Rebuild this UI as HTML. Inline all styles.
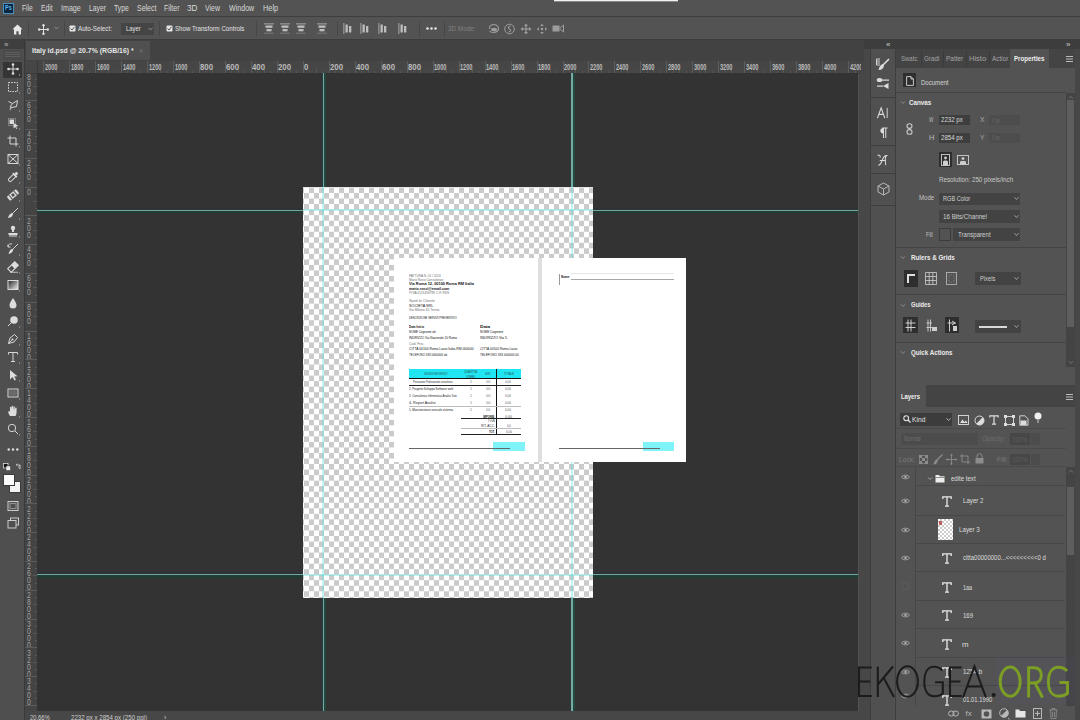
<!DOCTYPE html><html><head><meta charset="utf-8"><style>
*{margin:0;padding:0;box-sizing:border-box}
html,body{width:1080px;height:720px;overflow:hidden;background:#535353;font-family:"Liberation Sans",sans-serif}
.a,.t{position:absolute}
.t{white-space:nowrap;line-height:1;transform-origin:0 50%}
svg{position:absolute;overflow:visible}
.checker{background-color:#fff;background-image:linear-gradient(45deg,#cdcdcd 25%,transparent 25%,transparent 75%,#cdcdcd 75%),linear-gradient(45deg,#cdcdcd 25%,transparent 25%,transparent 75%,#cdcdcd 75%);background-size:10px 10px;background-position:0 0,5px 5px}
</style></head><body><div class="a" style="left:0px;top:0px;width:1080px;height:16px;background:#535353;"></div><div class="a" style="left:0px;top:16px;width:1080px;height:1px;background:#3e3e3e;"></div><div class="a" style="left:3px;top:3px;width:11px;height:11px;background:#0a2540;border:1px solid #4a90c0;"></div><span class="t" style="left:5.00px;top:5.47px;font-size:6.5px;color:#5cb8f0;font-weight:bold;transform:scaleX(0.840);">Ps</span><span class="t" style="left:22.00px;top:4.30px;font-size:8.5px;color:#d9d9d9;transform:scaleX(0.787);">File</span><span class="t" style="left:40.90px;top:4.30px;font-size:8.5px;color:#d9d9d9;transform:scaleX(0.792);">Edit</span><span class="t" style="left:61.00px;top:4.30px;font-size:8.5px;color:#d9d9d9;transform:scaleX(0.837);">Image</span><span class="t" style="left:88.80px;top:4.30px;font-size:8.5px;color:#d9d9d9;transform:scaleX(0.803);">Layer</span><span class="t" style="left:114.00px;top:4.30px;font-size:8.5px;color:#d9d9d9;transform:scaleX(0.802);">Type</span><span class="t" style="left:136.70px;top:4.30px;font-size:8.5px;color:#d9d9d9;transform:scaleX(0.824);">Select</span><span class="t" style="left:164.00px;top:4.30px;font-size:8.5px;color:#d9d9d9;transform:scaleX(0.819);">Filter</span><span class="t" style="left:187.00px;top:4.30px;font-size:8.5px;color:#d9d9d9;transform:scaleX(0.969);">3D</span><span class="t" style="left:204.80px;top:4.30px;font-size:8.5px;color:#d9d9d9;transform:scaleX(0.815);">View</span><span class="t" style="left:228.50px;top:4.30px;font-size:8.5px;color:#d9d9d9;transform:scaleX(0.833);">Window</span><span class="t" style="left:262.60px;top:4.30px;font-size:8.5px;color:#d9d9d9;transform:scaleX(0.867);">Help</span><div class="a" style="left:554px;top:0px;width:124px;height:2px;background:#f2f2f2;border-bottom:1px solid #888;"></div><div class="a" style="left:0px;top:17px;width:1080px;height:22px;background:#535353;"></div><div class="a" style="left:0px;top:39px;width:1080px;height:1px;background:#3c3c3c;"></div><svg style="left:12px;top:24px" width="11" height="11" viewBox="0 0 11 11"><path d="M5.5 0.5 L10.5 5.2 L9 5.2 L9 10.5 L6.6 10.5 L6.6 7.3 L4.4 7.3 L4.4 10.5 L2 10.5 L2 5.2 L0.5 5.2 Z" fill="#e8e8e8"/></svg><div class="a" style="left:28px;top:21px;width:1px;height:15px;background:#474747;"></div><svg style="left:38px;top:24px" width="11" height="11" viewBox="0 0 11 11"><g fill="#e0e0e0"><rect x="5" y="1" width="1" height="9"/><rect x="1" y="5" width="9" height="1"/><circle cx="5.5" cy="1.2" r="1.2"/><circle cx="5.5" cy="9.8" r="1.2"/><circle cx="1.2" cy="5.5" r="1.2"/><circle cx="9.8" cy="5.5" r="1.2"/></g></svg><svg style="left:54px;top:26px" width="5" height="4" viewBox="0 0 5 4"><path d="M0.5 0.8 L2.5 3 L4.5 0.8" stroke="#9a9a9a" fill="none" stroke-width="0.8"/></svg><div class="a" style="left:64px;top:21px;width:1px;height:15px;background:#474747;"></div><svg style="left:68.5px;top:25px" width="7" height="7" viewBox="0 0 7 7"><rect x="0.5" y="0.5" width="6" height="6" rx="1" fill="#e6e6e6"/><path d="M1.6 3.5 L3 5 L5.5 1.8" stroke="#535353" stroke-width="1" fill="none"/></svg><span class="t" style="left:77.80px;top:24.74px;font-size:8px;color:#e2e2e2;transform:scaleX(0.777);">Auto-Select:</span><div class="a" style="left:121px;top:23px;width:33px;height:12px;background:#454545;"></div><span class="t" style="left:126.00px;top:25.39px;font-size:7.5px;color:#e2e2e2;transform:scaleX(0.779);">Layer</span><svg style="left:148px;top:27px" width="5" height="4" viewBox="0 0 5 4"><path d="M0.5 0.8 L2.5 3 L4.5 0.8" stroke="#a0a0a0" fill="none" stroke-width="0.8"/></svg><div class="a" style="left:159px;top:21px;width:1px;height:15px;background:#474747;"></div><svg style="left:165.5px;top:25px" width="7" height="7" viewBox="0 0 7 7"><rect x="0.5" y="0.5" width="6" height="6" rx="1" fill="#e6e6e6"/><path d="M1.6 3.5 L3 5 L5.5 1.8" stroke="#535353" stroke-width="1" fill="none"/></svg><span class="t" style="left:175.30px;top:24.74px;font-size:8px;color:#e2e2e2;transform:scaleX(0.768);">Show Transform Controls</span><div class="a" style="left:256px;top:21px;width:1px;height:15px;background:#474747;"></div><svg style="left:264px;top:23px" width="10" height="11" viewBox="0 0 10 11"><g fill="#bdbdbd"><rect x="0" y="0.5" width="10" height="0.8"/><rect x="1.5" y="2.5" width="7" height="2.3"/><rect x="2.5" y="6" width="5" height="2.3"/><rect x="0" y="9.8" width="10" height="0.6" opacity="0.6"/></g></svg><svg style="left:280px;top:23px" width="10" height="11" viewBox="0 0 10 11"><g fill="#bdbdbd"><rect x="0" y="0.5" width="10" height="0.8"/><rect x="1.5" y="2.5" width="7" height="2.3"/><rect x="2.5" y="6" width="5" height="2.3"/><rect x="0" y="9.8" width="10" height="0.6" opacity="0.6"/></g></svg><svg style="left:296px;top:23px" width="10" height="11" viewBox="0 0 10 11"><g fill="#bdbdbd"><rect x="0" y="0.5" width="10" height="0.8"/><rect x="1.5" y="2.5" width="7" height="2.3"/><rect x="2.5" y="6" width="5" height="2.3"/><rect x="0" y="9.8" width="10" height="0.6" opacity="0.6"/></g></svg><svg style="left:317px;top:23px" width="10" height="11" viewBox="0 0 10 11"><g fill="#bdbdbd"><rect x="0" y="0.5" width="10" height="0.8"/><rect x="1.5" y="2.5" width="7" height="2.3"/><rect x="2.5" y="6" width="5" height="2.3"/><rect x="0" y="9.8" width="10" height="0.6" opacity="0.6"/></g></svg><div class="a" style="left:337px;top:21px;width:1px;height:15px;background:#474747;"></div><svg style="left:343px;top:23px" width="10" height="11" viewBox="0 0 10 11"><g fill="#bdbdbd"><rect x="0.5" y="0" width="0.8" height="11"/><rect x="2.5" y="1.5" width="2.3" height="8"/><rect x="6" y="3" width="2.3" height="6.5"/></g></svg><svg style="left:360px;top:23px" width="10" height="11" viewBox="0 0 10 11"><g fill="#bdbdbd"><rect x="0.5" y="0" width="0.8" height="11"/><rect x="2.5" y="1.5" width="2.3" height="8"/><rect x="6" y="3" width="2.3" height="6.5"/></g></svg><svg style="left:378px;top:23px" width="10" height="11" viewBox="0 0 10 11"><g fill="#bdbdbd"><rect x="0.5" y="0" width="0.8" height="11"/><rect x="2.5" y="1.5" width="2.3" height="8"/><rect x="6" y="3" width="2.3" height="6.5"/></g></svg><svg style="left:398px;top:23px" width="10" height="11" viewBox="0 0 10 11"><g fill="#bdbdbd"><rect x="0.5" y="0" width="0.8" height="11"/><rect x="2.5" y="1.5" width="2.3" height="8"/><rect x="6" y="3" width="2.3" height="6.5"/></g></svg><div class="a" style="left:419px;top:21px;width:1px;height:15px;background:#474747;"></div><svg style="left:426px;top:27px" width="11" height="3" viewBox="0 0 11 3"><g fill="#e6e6e6"><circle cx="1.5" cy="1.5" r="1.3"/><circle cx="5.5" cy="1.5" r="1.3"/><circle cx="9.5" cy="1.5" r="1.3"/></g></svg><div class="a" style="left:444px;top:21px;width:1px;height:15px;background:#474747;"></div><span class="t" style="left:448.30px;top:24.99px;font-size:7.5px;color:#808080;transform:scaleX(0.845);">3D Mode:</span><svg style="left:487.5px;top:23px" width="12" height="11" viewBox="0 0 12 11"><path d="M2 6 C0 3 5 0.5 8 2 C10.5 3.2 11.5 6 9.5 8 C7.5 10 3 10 1.5 8" stroke="#9c9c9c" stroke-width="1.1" fill="none"/><ellipse cx="6" cy="6.5" rx="3" ry="1.8" fill="#9c9c9c"/></svg><svg style="left:503.5px;top:22.5px" width="11" height="12" viewBox="0 0 11 12"><circle cx="5.5" cy="6" r="4.8" stroke="#9c9c9c" stroke-width="1" fill="none"/><path d="M6.5 3 C4 3 4 5.5 5.5 6 C7 6.5 7 9 4.5 9" stroke="#9c9c9c" stroke-width="1.1" fill="none"/></svg><svg style="left:519.5px;top:22.5px" width="12" height="12" viewBox="0 0 12 12"><path d="M6 0.5 L8 3 H4 Z M6 11.5 L8 9 H4 Z M0.5 6 L3 4 V8 Z M11.5 6 L9 4 V8 Z" fill="#9c9c9c"/><rect x="5.4" y="2.5" width="1.2" height="7" fill="#9c9c9c"/><rect x="2.5" y="5.4" width="7" height="1.2" fill="#9c9c9c"/></svg><svg style="left:535.5px;top:22.5px" width="12" height="12" viewBox="0 0 12 12"><path d="M6 0.8 L7.8 3 H4.2 Z M6 11.2 L7.8 9 H4.2 Z M0.8 6 L3 4.2 V7.8 Z M11.2 6 L9 4.2 V7.8 Z" fill="#9c9c9c"/><circle cx="6" cy="6" r="1.3" fill="#9c9c9c"/></svg><svg style="left:552px;top:24px" width="12" height="9" viewBox="0 0 12 9"><rect x="0.5" y="1.5" width="7" height="6" fill="#9c9c9c"/><path d="M7.5 4.5 L11.5 1 V8 Z" fill="none" stroke="#9c9c9c" stroke-width="1"/></svg><div class="a" style="left:25px;top:40px;width:839px;height:21px;background:#424242;"></div><div class="a" style="left:25.8px;top:41px;width:124px;height:19px;background:#505050;"></div><span class="t" style="left:31.70px;top:47.14px;font-size:8px;color:#e6e6e6;font-weight:bold;transform:scaleX(0.857);">Italy id.psd @ 20.7% (RGB/16) *</span><span class="t" style="left:138.70px;top:47.14px;font-size:8px;color:#7a7a7a;transform:scaleX(0.860);">×</span><div class="a" style="left:25px;top:61px;width:839px;height:12px;background:#464646;"></div><div class="a" style="left:25px;top:73px;width:11.5px;height:638px;background:#444444;"></div><div class="a" style="left:25px;top:72.5px;width:839px;height:0.5px;background:#3a3a3a;"></div><div class="a" style="left:36.5px;top:61px;width:0.5px;height:650px;background:#3a3a3a;"></div><div class="a" style="left:0;top:0;width:861px;height:80px;overflow:hidden"><div class="a" style="left:42.90px;top:61px;width:1px;height:12px;background:#5c5c5c"></div><div class="a" style="left:49.39px;top:71px;width:0.8px;height:2px;background:#585858"></div><div class="a" style="left:55.89px;top:69px;width:0.8px;height:4px;background:#585858"></div><div class="a" style="left:62.38px;top:71px;width:0.8px;height:2px;background:#585858"></div><span class="t" style="left:44.60px;top:62.96px;font-size:9px;color:#bababa;font-weight:bold;transform:scaleX(0.624);">2000</span><div class="a" style="left:68.88px;top:61px;width:1px;height:12px;background:#5c5c5c"></div><div class="a" style="left:75.38px;top:71px;width:0.8px;height:2px;background:#585858"></div><div class="a" style="left:81.87px;top:69px;width:0.8px;height:4px;background:#585858"></div><div class="a" style="left:88.36px;top:71px;width:0.8px;height:2px;background:#585858"></div><span class="t" style="left:70.58px;top:62.96px;font-size:9px;color:#bababa;font-weight:bold;transform:scaleX(0.624);">1800</span><div class="a" style="left:94.86px;top:61px;width:1px;height:12px;background:#5c5c5c"></div><div class="a" style="left:101.35px;top:71px;width:0.8px;height:2px;background:#585858"></div><div class="a" style="left:107.85px;top:69px;width:0.8px;height:4px;background:#585858"></div><div class="a" style="left:114.34px;top:71px;width:0.8px;height:2px;background:#585858"></div><span class="t" style="left:96.56px;top:62.96px;font-size:9px;color:#bababa;font-weight:bold;transform:scaleX(0.624);">1600</span><div class="a" style="left:120.84px;top:61px;width:1px;height:12px;background:#5c5c5c"></div><div class="a" style="left:127.33px;top:71px;width:0.8px;height:2px;background:#585858"></div><div class="a" style="left:133.83px;top:69px;width:0.8px;height:4px;background:#585858"></div><div class="a" style="left:140.32px;top:71px;width:0.8px;height:2px;background:#585858"></div><span class="t" style="left:122.54px;top:62.96px;font-size:9px;color:#bababa;font-weight:bold;transform:scaleX(0.624);">1400</span><div class="a" style="left:146.82px;top:61px;width:1px;height:12px;background:#5c5c5c"></div><div class="a" style="left:153.31px;top:71px;width:0.8px;height:2px;background:#585858"></div><div class="a" style="left:159.81px;top:69px;width:0.8px;height:4px;background:#585858"></div><div class="a" style="left:166.31px;top:71px;width:0.8px;height:2px;background:#585858"></div><span class="t" style="left:148.52px;top:62.96px;font-size:9px;color:#bababa;font-weight:bold;transform:scaleX(0.624);">1200</span><div class="a" style="left:172.80px;top:61px;width:1px;height:12px;background:#5c5c5c"></div><div class="a" style="left:179.29px;top:71px;width:0.8px;height:2px;background:#585858"></div><div class="a" style="left:185.79px;top:69px;width:0.8px;height:4px;background:#585858"></div><div class="a" style="left:192.28px;top:71px;width:0.8px;height:2px;background:#585858"></div><span class="t" style="left:174.50px;top:62.96px;font-size:9px;color:#bababa;font-weight:bold;transform:scaleX(0.624);">1000</span><div class="a" style="left:198.78px;top:61px;width:1px;height:12px;background:#5c5c5c"></div><div class="a" style="left:205.27px;top:71px;width:0.8px;height:2px;background:#585858"></div><div class="a" style="left:211.77px;top:69px;width:0.8px;height:4px;background:#585858"></div><div class="a" style="left:218.26px;top:71px;width:0.8px;height:2px;background:#585858"></div><span class="t" style="left:200.48px;top:62.96px;font-size:9px;color:#bababa;font-weight:bold;transform:scaleX(0.866);">800</span><div class="a" style="left:224.76px;top:61px;width:1px;height:12px;background:#5c5c5c"></div><div class="a" style="left:231.25px;top:71px;width:0.8px;height:2px;background:#585858"></div><div class="a" style="left:237.75px;top:69px;width:0.8px;height:4px;background:#585858"></div><div class="a" style="left:244.25px;top:71px;width:0.8px;height:2px;background:#585858"></div><span class="t" style="left:226.46px;top:62.96px;font-size:9px;color:#bababa;font-weight:bold;transform:scaleX(0.866);">600</span><div class="a" style="left:250.74px;top:61px;width:1px;height:12px;background:#5c5c5c"></div><div class="a" style="left:257.23px;top:71px;width:0.8px;height:2px;background:#585858"></div><div class="a" style="left:263.73px;top:69px;width:0.8px;height:4px;background:#585858"></div><div class="a" style="left:270.22px;top:71px;width:0.8px;height:2px;background:#585858"></div><span class="t" style="left:252.44px;top:62.96px;font-size:9px;color:#bababa;font-weight:bold;transform:scaleX(0.866);">400</span><div class="a" style="left:276.72px;top:61px;width:1px;height:12px;background:#5c5c5c"></div><div class="a" style="left:283.21px;top:71px;width:0.8px;height:2px;background:#585858"></div><div class="a" style="left:289.71px;top:69px;width:0.8px;height:4px;background:#585858"></div><div class="a" style="left:296.20px;top:71px;width:0.8px;height:2px;background:#585858"></div><span class="t" style="left:278.42px;top:62.96px;font-size:9px;color:#bababa;font-weight:bold;transform:scaleX(0.866);">200</span><div class="a" style="left:302.70px;top:61px;width:1px;height:12px;background:#5c5c5c"></div><div class="a" style="left:309.19px;top:71px;width:0.8px;height:2px;background:#585858"></div><div class="a" style="left:315.69px;top:69px;width:0.8px;height:4px;background:#585858"></div><div class="a" style="left:322.19px;top:71px;width:0.8px;height:2px;background:#585858"></div><span class="t" style="left:304.40px;top:62.96px;font-size:9px;color:#bababa;font-weight:bold;transform:scaleX(0.860);">0</span><div class="a" style="left:328.68px;top:61px;width:1px;height:12px;background:#5c5c5c"></div><div class="a" style="left:335.18px;top:71px;width:0.8px;height:2px;background:#585858"></div><div class="a" style="left:341.67px;top:69px;width:0.8px;height:4px;background:#585858"></div><div class="a" style="left:348.17px;top:71px;width:0.8px;height:2px;background:#585858"></div><span class="t" style="left:330.38px;top:62.96px;font-size:9px;color:#bababa;font-weight:bold;transform:scaleX(0.866);">200</span><div class="a" style="left:354.66px;top:61px;width:1px;height:12px;background:#5c5c5c"></div><div class="a" style="left:361.15px;top:71px;width:0.8px;height:2px;background:#585858"></div><div class="a" style="left:367.65px;top:69px;width:0.8px;height:4px;background:#585858"></div><div class="a" style="left:374.14px;top:71px;width:0.8px;height:2px;background:#585858"></div><span class="t" style="left:356.36px;top:62.96px;font-size:9px;color:#bababa;font-weight:bold;transform:scaleX(0.866);">400</span><div class="a" style="left:380.64px;top:61px;width:1px;height:12px;background:#5c5c5c"></div><div class="a" style="left:387.13px;top:71px;width:0.8px;height:2px;background:#585858"></div><div class="a" style="left:393.63px;top:69px;width:0.8px;height:4px;background:#585858"></div><div class="a" style="left:400.12px;top:71px;width:0.8px;height:2px;background:#585858"></div><span class="t" style="left:382.34px;top:62.96px;font-size:9px;color:#bababa;font-weight:bold;transform:scaleX(0.866);">600</span><div class="a" style="left:406.62px;top:61px;width:1px;height:12px;background:#5c5c5c"></div><div class="a" style="left:413.12px;top:71px;width:0.8px;height:2px;background:#585858"></div><div class="a" style="left:419.61px;top:69px;width:0.8px;height:4px;background:#585858"></div><div class="a" style="left:426.11px;top:71px;width:0.8px;height:2px;background:#585858"></div><span class="t" style="left:408.32px;top:62.96px;font-size:9px;color:#bababa;font-weight:bold;transform:scaleX(0.866);">800</span><div class="a" style="left:432.60px;top:61px;width:1px;height:12px;background:#5c5c5c"></div><div class="a" style="left:439.10px;top:71px;width:0.8px;height:2px;background:#585858"></div><div class="a" style="left:445.59px;top:69px;width:0.8px;height:4px;background:#585858"></div><div class="a" style="left:452.09px;top:71px;width:0.8px;height:2px;background:#585858"></div><span class="t" style="left:434.30px;top:62.96px;font-size:9px;color:#bababa;font-weight:bold;transform:scaleX(0.624);">1000</span><div class="a" style="left:458.58px;top:61px;width:1px;height:12px;background:#5c5c5c"></div><div class="a" style="left:465.07px;top:71px;width:0.8px;height:2px;background:#585858"></div><div class="a" style="left:471.57px;top:69px;width:0.8px;height:4px;background:#585858"></div><div class="a" style="left:478.06px;top:71px;width:0.8px;height:2px;background:#585858"></div><span class="t" style="left:460.28px;top:62.96px;font-size:9px;color:#bababa;font-weight:bold;transform:scaleX(0.624);">1200</span><div class="a" style="left:484.56px;top:61px;width:1px;height:12px;background:#5c5c5c"></div><div class="a" style="left:491.06px;top:71px;width:0.8px;height:2px;background:#585858"></div><div class="a" style="left:497.55px;top:69px;width:0.8px;height:4px;background:#585858"></div><div class="a" style="left:504.05px;top:71px;width:0.8px;height:2px;background:#585858"></div><span class="t" style="left:486.26px;top:62.96px;font-size:9px;color:#bababa;font-weight:bold;transform:scaleX(0.624);">1400</span><div class="a" style="left:510.54px;top:61px;width:1px;height:12px;background:#5c5c5c"></div><div class="a" style="left:517.03px;top:71px;width:0.8px;height:2px;background:#585858"></div><div class="a" style="left:523.53px;top:69px;width:0.8px;height:4px;background:#585858"></div><div class="a" style="left:530.02px;top:71px;width:0.8px;height:2px;background:#585858"></div><span class="t" style="left:512.24px;top:62.96px;font-size:9px;color:#bababa;font-weight:bold;transform:scaleX(0.624);">1600</span><div class="a" style="left:536.52px;top:61px;width:1px;height:12px;background:#5c5c5c"></div><div class="a" style="left:543.01px;top:71px;width:0.8px;height:2px;background:#585858"></div><div class="a" style="left:549.51px;top:69px;width:0.8px;height:4px;background:#585858"></div><div class="a" style="left:556.00px;top:71px;width:0.8px;height:2px;background:#585858"></div><span class="t" style="left:538.22px;top:62.96px;font-size:9px;color:#bababa;font-weight:bold;transform:scaleX(0.624);">1800</span><div class="a" style="left:562.50px;top:61px;width:1px;height:12px;background:#5c5c5c"></div><div class="a" style="left:569.00px;top:71px;width:0.8px;height:2px;background:#585858"></div><div class="a" style="left:575.49px;top:69px;width:0.8px;height:4px;background:#585858"></div><div class="a" style="left:581.99px;top:71px;width:0.8px;height:2px;background:#585858"></div><span class="t" style="left:564.20px;top:62.96px;font-size:9px;color:#bababa;font-weight:bold;transform:scaleX(0.624);">2000</span><div class="a" style="left:588.48px;top:61px;width:1px;height:12px;background:#5c5c5c"></div><div class="a" style="left:594.98px;top:71px;width:0.8px;height:2px;background:#585858"></div><div class="a" style="left:601.47px;top:69px;width:0.8px;height:4px;background:#585858"></div><div class="a" style="left:607.97px;top:71px;width:0.8px;height:2px;background:#585858"></div><span class="t" style="left:590.18px;top:62.96px;font-size:9px;color:#bababa;font-weight:bold;transform:scaleX(0.624);">2200</span><div class="a" style="left:614.46px;top:61px;width:1px;height:12px;background:#5c5c5c"></div><div class="a" style="left:620.96px;top:71px;width:0.8px;height:2px;background:#585858"></div><div class="a" style="left:627.45px;top:69px;width:0.8px;height:4px;background:#585858"></div><div class="a" style="left:633.95px;top:71px;width:0.8px;height:2px;background:#585858"></div><span class="t" style="left:616.16px;top:62.96px;font-size:9px;color:#bababa;font-weight:bold;transform:scaleX(0.624);">2400</span><div class="a" style="left:640.44px;top:61px;width:1px;height:12px;background:#5c5c5c"></div><div class="a" style="left:646.94px;top:71px;width:0.8px;height:2px;background:#585858"></div><div class="a" style="left:653.43px;top:69px;width:0.8px;height:4px;background:#585858"></div><div class="a" style="left:659.93px;top:71px;width:0.8px;height:2px;background:#585858"></div><span class="t" style="left:642.14px;top:62.96px;font-size:9px;color:#bababa;font-weight:bold;transform:scaleX(0.624);">2600</span><div class="a" style="left:666.42px;top:61px;width:1px;height:12px;background:#5c5c5c"></div><div class="a" style="left:672.92px;top:71px;width:0.8px;height:2px;background:#585858"></div><div class="a" style="left:679.41px;top:69px;width:0.8px;height:4px;background:#585858"></div><div class="a" style="left:685.91px;top:71px;width:0.8px;height:2px;background:#585858"></div><span class="t" style="left:668.12px;top:62.96px;font-size:9px;color:#bababa;font-weight:bold;transform:scaleX(0.624);">2800</span><div class="a" style="left:692.40px;top:61px;width:1px;height:12px;background:#5c5c5c"></div><div class="a" style="left:698.89px;top:71px;width:0.8px;height:2px;background:#585858"></div><div class="a" style="left:705.39px;top:69px;width:0.8px;height:4px;background:#585858"></div><div class="a" style="left:711.88px;top:71px;width:0.8px;height:2px;background:#585858"></div><span class="t" style="left:694.10px;top:62.96px;font-size:9px;color:#bababa;font-weight:bold;transform:scaleX(0.624);">3000</span><div class="a" style="left:718.38px;top:61px;width:1px;height:12px;background:#5c5c5c"></div><div class="a" style="left:724.88px;top:71px;width:0.8px;height:2px;background:#585858"></div><div class="a" style="left:731.37px;top:69px;width:0.8px;height:4px;background:#585858"></div><div class="a" style="left:737.87px;top:71px;width:0.8px;height:2px;background:#585858"></div><span class="t" style="left:720.08px;top:62.96px;font-size:9px;color:#bababa;font-weight:bold;transform:scaleX(0.624);">3200</span><div class="a" style="left:744.36px;top:61px;width:1px;height:12px;background:#5c5c5c"></div><div class="a" style="left:750.86px;top:71px;width:0.8px;height:2px;background:#585858"></div><div class="a" style="left:757.35px;top:69px;width:0.8px;height:4px;background:#585858"></div><div class="a" style="left:763.85px;top:71px;width:0.8px;height:2px;background:#585858"></div><span class="t" style="left:746.06px;top:62.96px;font-size:9px;color:#bababa;font-weight:bold;transform:scaleX(0.624);">3400</span><div class="a" style="left:770.34px;top:61px;width:1px;height:12px;background:#5c5c5c"></div><div class="a" style="left:776.83px;top:71px;width:0.8px;height:2px;background:#585858"></div><div class="a" style="left:783.33px;top:69px;width:0.8px;height:4px;background:#585858"></div><div class="a" style="left:789.82px;top:71px;width:0.8px;height:2px;background:#585858"></div><span class="t" style="left:772.04px;top:62.96px;font-size:9px;color:#bababa;font-weight:bold;transform:scaleX(0.624);">3600</span><div class="a" style="left:796.32px;top:61px;width:1px;height:12px;background:#5c5c5c"></div><div class="a" style="left:802.81px;top:71px;width:0.8px;height:2px;background:#585858"></div><div class="a" style="left:809.31px;top:69px;width:0.8px;height:4px;background:#585858"></div><div class="a" style="left:815.80px;top:71px;width:0.8px;height:2px;background:#585858"></div><span class="t" style="left:798.02px;top:62.96px;font-size:9px;color:#bababa;font-weight:bold;transform:scaleX(0.624);">3800</span><div class="a" style="left:822.30px;top:61px;width:1px;height:12px;background:#5c5c5c"></div><div class="a" style="left:828.79px;top:71px;width:0.8px;height:2px;background:#585858"></div><div class="a" style="left:835.29px;top:69px;width:0.8px;height:4px;background:#585858"></div><div class="a" style="left:841.78px;top:71px;width:0.8px;height:2px;background:#585858"></div><span class="t" style="left:824.00px;top:62.96px;font-size:9px;color:#bababa;font-weight:bold;transform:scaleX(0.624);">4000</span><div class="a" style="left:848.28px;top:61px;width:1px;height:12px;background:#5c5c5c"></div><div class="a" style="left:854.77px;top:71px;width:0.8px;height:2px;background:#585858"></div><span class="t" style="left:849.98px;top:62.96px;font-size:9px;color:#bababa;font-weight:bold;transform:scaleX(0.624);">4200</span></div><div class="a" style="left:35px;top:78.50px;width:2px;height:0.8px;background:#585858"></div><div class="a" style="left:33px;top:85.70px;width:4px;height:0.8px;background:#585858"></div><div class="a" style="left:35px;top:92.90px;width:2px;height:0.8px;background:#585858"></div><span class="t" style="left:26.60px;top:72.65px;font-size:8.6px;color:#a0a0a0;transform:scaleX(0.800);">8</span><span class="t" style="left:26.60px;top:79.65px;font-size:8.6px;color:#a0a0a0;transform:scaleX(0.800);">0</span><span class="t" style="left:26.60px;top:86.65px;font-size:8.6px;color:#a0a0a0;transform:scaleX(0.800);">0</span><div class="a" style="left:25px;top:100.10px;width:12px;height:1px;background:#5c5c5c"></div><div class="a" style="left:35px;top:107.30px;width:2px;height:0.8px;background:#585858"></div><div class="a" style="left:33px;top:114.50px;width:4px;height:0.8px;background:#585858"></div><div class="a" style="left:35px;top:121.70px;width:2px;height:0.8px;background:#585858"></div><span class="t" style="left:26.60px;top:101.45px;font-size:8.6px;color:#a0a0a0;transform:scaleX(0.800);">6</span><span class="t" style="left:26.60px;top:108.45px;font-size:8.6px;color:#a0a0a0;transform:scaleX(0.800);">0</span><span class="t" style="left:26.60px;top:115.45px;font-size:8.6px;color:#a0a0a0;transform:scaleX(0.800);">0</span><div class="a" style="left:25px;top:128.90px;width:12px;height:1px;background:#5c5c5c"></div><div class="a" style="left:35px;top:136.10px;width:2px;height:0.8px;background:#585858"></div><div class="a" style="left:33px;top:143.30px;width:4px;height:0.8px;background:#585858"></div><div class="a" style="left:35px;top:150.50px;width:2px;height:0.8px;background:#585858"></div><span class="t" style="left:26.60px;top:130.25px;font-size:8.6px;color:#a0a0a0;transform:scaleX(0.800);">4</span><span class="t" style="left:26.60px;top:137.25px;font-size:8.6px;color:#a0a0a0;transform:scaleX(0.800);">0</span><span class="t" style="left:26.60px;top:144.25px;font-size:8.6px;color:#a0a0a0;transform:scaleX(0.800);">0</span><div class="a" style="left:25px;top:157.70px;width:12px;height:1px;background:#5c5c5c"></div><div class="a" style="left:35px;top:164.90px;width:2px;height:0.8px;background:#585858"></div><div class="a" style="left:33px;top:172.10px;width:4px;height:0.8px;background:#585858"></div><div class="a" style="left:35px;top:179.30px;width:2px;height:0.8px;background:#585858"></div><span class="t" style="left:26.60px;top:159.05px;font-size:8.6px;color:#a0a0a0;transform:scaleX(0.800);">2</span><span class="t" style="left:26.60px;top:166.05px;font-size:8.6px;color:#a0a0a0;transform:scaleX(0.800);">0</span><span class="t" style="left:26.60px;top:173.05px;font-size:8.6px;color:#a0a0a0;transform:scaleX(0.800);">0</span><div class="a" style="left:25px;top:186.50px;width:12px;height:1px;background:#5c5c5c"></div><div class="a" style="left:35px;top:193.70px;width:2px;height:0.8px;background:#585858"></div><div class="a" style="left:33px;top:200.90px;width:4px;height:0.8px;background:#585858"></div><div class="a" style="left:35px;top:208.10px;width:2px;height:0.8px;background:#585858"></div><span class="t" style="left:26.60px;top:187.85px;font-size:8.6px;color:#a0a0a0;transform:scaleX(0.800);">0</span><div class="a" style="left:25px;top:215.30px;width:12px;height:1px;background:#5c5c5c"></div><div class="a" style="left:35px;top:222.50px;width:2px;height:0.8px;background:#585858"></div><div class="a" style="left:33px;top:229.70px;width:4px;height:0.8px;background:#585858"></div><div class="a" style="left:35px;top:236.90px;width:2px;height:0.8px;background:#585858"></div><span class="t" style="left:26.60px;top:216.65px;font-size:8.6px;color:#a0a0a0;transform:scaleX(0.800);">2</span><span class="t" style="left:26.60px;top:223.65px;font-size:8.6px;color:#a0a0a0;transform:scaleX(0.800);">0</span><span class="t" style="left:26.60px;top:230.65px;font-size:8.6px;color:#a0a0a0;transform:scaleX(0.800);">0</span><div class="a" style="left:25px;top:244.10px;width:12px;height:1px;background:#5c5c5c"></div><div class="a" style="left:35px;top:251.30px;width:2px;height:0.8px;background:#585858"></div><div class="a" style="left:33px;top:258.50px;width:4px;height:0.8px;background:#585858"></div><div class="a" style="left:35px;top:265.70px;width:2px;height:0.8px;background:#585858"></div><span class="t" style="left:26.60px;top:245.45px;font-size:8.6px;color:#a0a0a0;transform:scaleX(0.800);">4</span><span class="t" style="left:26.60px;top:252.45px;font-size:8.6px;color:#a0a0a0;transform:scaleX(0.800);">0</span><span class="t" style="left:26.60px;top:259.45px;font-size:8.6px;color:#a0a0a0;transform:scaleX(0.800);">0</span><div class="a" style="left:25px;top:272.90px;width:12px;height:1px;background:#5c5c5c"></div><div class="a" style="left:35px;top:280.10px;width:2px;height:0.8px;background:#585858"></div><div class="a" style="left:33px;top:287.30px;width:4px;height:0.8px;background:#585858"></div><div class="a" style="left:35px;top:294.50px;width:2px;height:0.8px;background:#585858"></div><span class="t" style="left:26.60px;top:274.25px;font-size:8.6px;color:#a0a0a0;transform:scaleX(0.800);">6</span><span class="t" style="left:26.60px;top:281.25px;font-size:8.6px;color:#a0a0a0;transform:scaleX(0.800);">0</span><span class="t" style="left:26.60px;top:288.25px;font-size:8.6px;color:#a0a0a0;transform:scaleX(0.800);">0</span><div class="a" style="left:25px;top:301.70px;width:12px;height:1px;background:#5c5c5c"></div><div class="a" style="left:35px;top:308.90px;width:2px;height:0.8px;background:#585858"></div><div class="a" style="left:33px;top:316.10px;width:4px;height:0.8px;background:#585858"></div><div class="a" style="left:35px;top:323.30px;width:2px;height:0.8px;background:#585858"></div><span class="t" style="left:26.60px;top:303.05px;font-size:8.6px;color:#a0a0a0;transform:scaleX(0.800);">8</span><span class="t" style="left:26.60px;top:310.05px;font-size:8.6px;color:#a0a0a0;transform:scaleX(0.800);">0</span><span class="t" style="left:26.60px;top:317.05px;font-size:8.6px;color:#a0a0a0;transform:scaleX(0.800);">0</span><div class="a" style="left:25px;top:330.50px;width:12px;height:1px;background:#5c5c5c"></div><div class="a" style="left:35px;top:337.70px;width:2px;height:0.8px;background:#585858"></div><div class="a" style="left:33px;top:344.90px;width:4px;height:0.8px;background:#585858"></div><div class="a" style="left:35px;top:352.10px;width:2px;height:0.8px;background:#585858"></div><span class="t" style="left:26.60px;top:331.85px;font-size:8.6px;color:#a0a0a0;transform:scaleX(0.800);">1</span><span class="t" style="left:26.60px;top:338.85px;font-size:8.6px;color:#a0a0a0;transform:scaleX(0.800);">0</span><span class="t" style="left:26.60px;top:345.85px;font-size:8.6px;color:#a0a0a0;transform:scaleX(0.800);">0</span><span class="t" style="left:26.60px;top:352.85px;font-size:8.6px;color:#a0a0a0;transform:scaleX(0.800);">0</span><div class="a" style="left:25px;top:359.30px;width:12px;height:1px;background:#5c5c5c"></div><div class="a" style="left:35px;top:366.50px;width:2px;height:0.8px;background:#585858"></div><div class="a" style="left:33px;top:373.70px;width:4px;height:0.8px;background:#585858"></div><div class="a" style="left:35px;top:380.90px;width:2px;height:0.8px;background:#585858"></div><span class="t" style="left:26.60px;top:360.65px;font-size:8.6px;color:#a0a0a0;transform:scaleX(0.800);">1</span><span class="t" style="left:26.60px;top:367.65px;font-size:8.6px;color:#a0a0a0;transform:scaleX(0.800);">2</span><span class="t" style="left:26.60px;top:374.65px;font-size:8.6px;color:#a0a0a0;transform:scaleX(0.800);">0</span><span class="t" style="left:26.60px;top:381.65px;font-size:8.6px;color:#a0a0a0;transform:scaleX(0.800);">0</span><div class="a" style="left:25px;top:388.10px;width:12px;height:1px;background:#5c5c5c"></div><div class="a" style="left:35px;top:395.30px;width:2px;height:0.8px;background:#585858"></div><div class="a" style="left:33px;top:402.50px;width:4px;height:0.8px;background:#585858"></div><div class="a" style="left:35px;top:409.70px;width:2px;height:0.8px;background:#585858"></div><span class="t" style="left:26.60px;top:389.45px;font-size:8.6px;color:#a0a0a0;transform:scaleX(0.800);">1</span><span class="t" style="left:26.60px;top:396.45px;font-size:8.6px;color:#a0a0a0;transform:scaleX(0.800);">4</span><span class="t" style="left:26.60px;top:403.45px;font-size:8.6px;color:#a0a0a0;transform:scaleX(0.800);">0</span><span class="t" style="left:26.60px;top:410.45px;font-size:8.6px;color:#a0a0a0;transform:scaleX(0.800);">0</span><div class="a" style="left:25px;top:416.90px;width:12px;height:1px;background:#5c5c5c"></div><div class="a" style="left:35px;top:424.10px;width:2px;height:0.8px;background:#585858"></div><div class="a" style="left:33px;top:431.30px;width:4px;height:0.8px;background:#585858"></div><div class="a" style="left:35px;top:438.50px;width:2px;height:0.8px;background:#585858"></div><span class="t" style="left:26.60px;top:418.25px;font-size:8.6px;color:#a0a0a0;transform:scaleX(0.800);">1</span><span class="t" style="left:26.60px;top:425.25px;font-size:8.6px;color:#a0a0a0;transform:scaleX(0.800);">6</span><span class="t" style="left:26.60px;top:432.25px;font-size:8.6px;color:#a0a0a0;transform:scaleX(0.800);">0</span><span class="t" style="left:26.60px;top:439.25px;font-size:8.6px;color:#a0a0a0;transform:scaleX(0.800);">0</span><div class="a" style="left:25px;top:445.70px;width:12px;height:1px;background:#5c5c5c"></div><div class="a" style="left:35px;top:452.90px;width:2px;height:0.8px;background:#585858"></div><div class="a" style="left:33px;top:460.10px;width:4px;height:0.8px;background:#585858"></div><div class="a" style="left:35px;top:467.30px;width:2px;height:0.8px;background:#585858"></div><span class="t" style="left:26.60px;top:447.05px;font-size:8.6px;color:#a0a0a0;transform:scaleX(0.800);">1</span><span class="t" style="left:26.60px;top:454.05px;font-size:8.6px;color:#a0a0a0;transform:scaleX(0.800);">8</span><span class="t" style="left:26.60px;top:461.05px;font-size:8.6px;color:#a0a0a0;transform:scaleX(0.800);">0</span><span class="t" style="left:26.60px;top:468.05px;font-size:8.6px;color:#a0a0a0;transform:scaleX(0.800);">0</span><div class="a" style="left:25px;top:474.50px;width:12px;height:1px;background:#5c5c5c"></div><div class="a" style="left:35px;top:481.70px;width:2px;height:0.8px;background:#585858"></div><div class="a" style="left:33px;top:488.90px;width:4px;height:0.8px;background:#585858"></div><div class="a" style="left:35px;top:496.10px;width:2px;height:0.8px;background:#585858"></div><span class="t" style="left:26.60px;top:475.85px;font-size:8.6px;color:#a0a0a0;transform:scaleX(0.800);">2</span><span class="t" style="left:26.60px;top:482.85px;font-size:8.6px;color:#a0a0a0;transform:scaleX(0.800);">0</span><span class="t" style="left:26.60px;top:489.85px;font-size:8.6px;color:#a0a0a0;transform:scaleX(0.800);">0</span><span class="t" style="left:26.60px;top:496.85px;font-size:8.6px;color:#a0a0a0;transform:scaleX(0.800);">0</span><div class="a" style="left:25px;top:503.30px;width:12px;height:1px;background:#5c5c5c"></div><div class="a" style="left:35px;top:510.50px;width:2px;height:0.8px;background:#585858"></div><div class="a" style="left:33px;top:517.70px;width:4px;height:0.8px;background:#585858"></div><div class="a" style="left:35px;top:524.90px;width:2px;height:0.8px;background:#585858"></div><span class="t" style="left:26.60px;top:504.65px;font-size:8.6px;color:#a0a0a0;transform:scaleX(0.800);">2</span><span class="t" style="left:26.60px;top:511.65px;font-size:8.6px;color:#a0a0a0;transform:scaleX(0.800);">2</span><span class="t" style="left:26.60px;top:518.65px;font-size:8.6px;color:#a0a0a0;transform:scaleX(0.800);">0</span><span class="t" style="left:26.60px;top:525.65px;font-size:8.6px;color:#a0a0a0;transform:scaleX(0.800);">0</span><div class="a" style="left:25px;top:532.10px;width:12px;height:1px;background:#5c5c5c"></div><div class="a" style="left:35px;top:539.30px;width:2px;height:0.8px;background:#585858"></div><div class="a" style="left:33px;top:546.50px;width:4px;height:0.8px;background:#585858"></div><div class="a" style="left:35px;top:553.70px;width:2px;height:0.8px;background:#585858"></div><span class="t" style="left:26.60px;top:533.45px;font-size:8.6px;color:#a0a0a0;transform:scaleX(0.800);">2</span><span class="t" style="left:26.60px;top:540.45px;font-size:8.6px;color:#a0a0a0;transform:scaleX(0.800);">4</span><span class="t" style="left:26.60px;top:547.45px;font-size:8.6px;color:#a0a0a0;transform:scaleX(0.800);">0</span><span class="t" style="left:26.60px;top:554.45px;font-size:8.6px;color:#a0a0a0;transform:scaleX(0.800);">0</span><div class="a" style="left:25px;top:560.90px;width:12px;height:1px;background:#5c5c5c"></div><div class="a" style="left:35px;top:568.10px;width:2px;height:0.8px;background:#585858"></div><div class="a" style="left:33px;top:575.30px;width:4px;height:0.8px;background:#585858"></div><div class="a" style="left:35px;top:582.50px;width:2px;height:0.8px;background:#585858"></div><span class="t" style="left:26.60px;top:562.25px;font-size:8.6px;color:#a0a0a0;transform:scaleX(0.800);">2</span><span class="t" style="left:26.60px;top:569.25px;font-size:8.6px;color:#a0a0a0;transform:scaleX(0.800);">6</span><span class="t" style="left:26.60px;top:576.25px;font-size:8.6px;color:#a0a0a0;transform:scaleX(0.800);">0</span><span class="t" style="left:26.60px;top:583.25px;font-size:8.6px;color:#a0a0a0;transform:scaleX(0.800);">0</span><div class="a" style="left:25px;top:589.70px;width:12px;height:1px;background:#5c5c5c"></div><div class="a" style="left:35px;top:596.90px;width:2px;height:0.8px;background:#585858"></div><div class="a" style="left:33px;top:604.10px;width:4px;height:0.8px;background:#585858"></div><div class="a" style="left:35px;top:611.30px;width:2px;height:0.8px;background:#585858"></div><span class="t" style="left:26.60px;top:591.05px;font-size:8.6px;color:#a0a0a0;transform:scaleX(0.800);">2</span><span class="t" style="left:26.60px;top:598.05px;font-size:8.6px;color:#a0a0a0;transform:scaleX(0.800);">8</span><span class="t" style="left:26.60px;top:605.05px;font-size:8.6px;color:#a0a0a0;transform:scaleX(0.800);">0</span><span class="t" style="left:26.60px;top:612.05px;font-size:8.6px;color:#a0a0a0;transform:scaleX(0.800);">0</span><div class="a" style="left:25px;top:618.50px;width:12px;height:1px;background:#5c5c5c"></div><div class="a" style="left:35px;top:625.70px;width:2px;height:0.8px;background:#585858"></div><div class="a" style="left:33px;top:632.90px;width:4px;height:0.8px;background:#585858"></div><div class="a" style="left:35px;top:640.10px;width:2px;height:0.8px;background:#585858"></div><span class="t" style="left:26.60px;top:619.85px;font-size:8.6px;color:#a0a0a0;transform:scaleX(0.800);">3</span><span class="t" style="left:26.60px;top:626.85px;font-size:8.6px;color:#a0a0a0;transform:scaleX(0.800);">0</span><span class="t" style="left:26.60px;top:633.85px;font-size:8.6px;color:#a0a0a0;transform:scaleX(0.800);">0</span><span class="t" style="left:26.60px;top:640.85px;font-size:8.6px;color:#a0a0a0;transform:scaleX(0.800);">0</span><div class="a" style="left:25px;top:647.30px;width:12px;height:1px;background:#5c5c5c"></div><div class="a" style="left:35px;top:654.50px;width:2px;height:0.8px;background:#585858"></div><div class="a" style="left:33px;top:661.70px;width:4px;height:0.8px;background:#585858"></div><div class="a" style="left:35px;top:668.90px;width:2px;height:0.8px;background:#585858"></div><span class="t" style="left:26.60px;top:648.65px;font-size:8.6px;color:#a0a0a0;transform:scaleX(0.800);">3</span><span class="t" style="left:26.60px;top:655.65px;font-size:8.6px;color:#a0a0a0;transform:scaleX(0.800);">2</span><span class="t" style="left:26.60px;top:662.65px;font-size:8.6px;color:#a0a0a0;transform:scaleX(0.800);">0</span><span class="t" style="left:26.60px;top:669.65px;font-size:8.6px;color:#a0a0a0;transform:scaleX(0.800);">0</span><div class="a" style="left:25px;top:676.10px;width:12px;height:1px;background:#5c5c5c"></div><div class="a" style="left:35px;top:683.30px;width:2px;height:0.8px;background:#585858"></div><div class="a" style="left:33px;top:690.50px;width:4px;height:0.8px;background:#585858"></div><div class="a" style="left:35px;top:697.70px;width:2px;height:0.8px;background:#585858"></div><span class="t" style="left:26.60px;top:677.45px;font-size:8.6px;color:#a0a0a0;transform:scaleX(0.800);">3</span><span class="t" style="left:26.60px;top:684.45px;font-size:8.6px;color:#a0a0a0;transform:scaleX(0.800);">4</span><span class="t" style="left:26.60px;top:691.45px;font-size:8.6px;color:#a0a0a0;transform:scaleX(0.800);">0</span><span class="t" style="left:26.60px;top:698.45px;font-size:8.6px;color:#a0a0a0;transform:scaleX(0.800);">0</span><div class="a" style="left:25px;top:704.90px;width:12px;height:1px;background:#5c5c5c"></div><div class="a" style="left:37px;top:73px;width:821px;height:638px;background:#333333;overflow:hidden"><div class="a" style="left:266px;top:114px;width:290px;height:411px;background:repeating-conic-gradient(#cbcbcb 0 25%,#ffffff 0 50%) 1px 0.5px/10px 11.07px"></div></div><div class="a" style="left:320.9px;top:73px;width:1.5px;height:114px;background:#2f333a;"></div><div class="a" style="left:322.4px;top:73px;width:1px;height:114px;background:#25403b;"></div><div class="a" style="left:324.4px;top:73px;width:1.8px;height:114px;background:#244740;"></div><div class="a" style="left:322.7px;top:73px;width:1.5px;height:114px;background:#74aaa2;"></div><div class="a" style="left:320.9px;top:598px;width:1.5px;height:113px;background:#2f333a;"></div><div class="a" style="left:322.4px;top:598px;width:1px;height:113px;background:#25403b;"></div><div class="a" style="left:324.4px;top:598px;width:1.8px;height:113px;background:#244740;"></div><div class="a" style="left:322.7px;top:598px;width:1.5px;height:113px;background:#74aaa2;"></div><div class="a" style="left:322.4px;top:187px;width:2px;height:411px;background:rgba(80,228,222,0.36);"></div><div class="a" style="left:569.3px;top:73px;width:1.5px;height:114px;background:#2f333a;"></div><div class="a" style="left:570.8px;top:73px;width:1px;height:114px;background:#25403b;"></div><div class="a" style="left:572.8px;top:73px;width:1.8px;height:114px;background:#244740;"></div><div class="a" style="left:571.0999999999999px;top:73px;width:1.5px;height:114px;background:#74aaa2;"></div><div class="a" style="left:569.3px;top:598px;width:1.5px;height:113px;background:#2f333a;"></div><div class="a" style="left:570.8px;top:598px;width:1px;height:113px;background:#25403b;"></div><div class="a" style="left:572.8px;top:598px;width:1.8px;height:113px;background:#244740;"></div><div class="a" style="left:571.0999999999999px;top:598px;width:1.5px;height:113px;background:#74aaa2;"></div><div class="a" style="left:570.8px;top:187px;width:2px;height:411px;background:rgba(80,228,222,0.36);"></div><div class="a" style="left:37px;top:207.9px;width:266px;height:1.5px;background:#2d3339;"></div><div class="a" style="left:37px;top:211.20000000000002px;width:266px;height:2.2px;background:#213d36;"></div><div class="a" style="left:37px;top:209.6px;width:266px;height:1.6px;background:#6fa69e;"></div><div class="a" style="left:593px;top:207.9px;width:265px;height:1.5px;background:#2d3339;"></div><div class="a" style="left:593px;top:211.20000000000002px;width:265px;height:2.2px;background:#213d36;"></div><div class="a" style="left:593px;top:209.6px;width:265px;height:1.6px;background:#6fa69e;"></div><div class="a" style="left:303px;top:209.4px;width:290px;height:2px;background:rgba(80,228,222,0.36);"></div><div class="a" style="left:37px;top:572.1px;width:266px;height:1.5px;background:#2d3339;"></div><div class="a" style="left:37px;top:575.4px;width:266px;height:2.2px;background:#213d36;"></div><div class="a" style="left:37px;top:573.8000000000001px;width:266px;height:1.6px;background:#6fa69e;"></div><div class="a" style="left:593px;top:572.1px;width:265px;height:1.5px;background:#2d3339;"></div><div class="a" style="left:593px;top:575.4px;width:265px;height:2.2px;background:#213d36;"></div><div class="a" style="left:593px;top:573.8000000000001px;width:265px;height:1.6px;background:#6fa69e;"></div><div class="a" style="left:303px;top:573.6px;width:290px;height:2px;background:rgba(80,228,222,0.36);"></div><div class="a" style="left:394px;top:258px;width:292px;height:203.5px;background:#ffffff;"></div><div class="a" style="left:538px;top:258px;width:4px;height:203.5px;background:#dedede;"></div><span class="t" style="left:409.00px;top:274.86px;font-size:3.4px;color:#707070;transform:scaleX(0.922);">FATTURA N. 01 / 2024</span><span class="t" style="left:409.00px;top:279.16px;font-size:3.4px;color:#707070;transform:scaleX(0.933);">Mario Rossi Consulenze</span><span class="t" style="left:409.00px;top:283.46px;font-size:3.4px;color:#111111;font-weight:bold;transform:scaleX(1.145);">Via Roma 12, 00100 Roma RM Italia</span><span class="t" style="left:409.00px;top:288.06px;font-size:3.4px;color:#111111;font-weight:bold;transform:scaleX(1.056);">mario.rossi@email.com</span><span class="t" style="left:409.00px;top:292.06px;font-size:3.4px;color:#707070;transform:scaleX(0.945);">P.IVA 0123456789 C.F. RSS</span><span class="t" style="left:409.00px;top:300.46px;font-size:3.4px;color:#707070;transform:scaleX(1.125);">Spett.le Cliente</span><span class="t" style="left:409.00px;top:304.66px;font-size:3.4px;color:#111111;transform:scaleX(1.108);">SOCIETA SRL</span><span class="t" style="left:409.00px;top:309.16px;font-size:3.4px;color:#707070;transform:scaleX(0.994);">Via Milano 45 Torino</span><span class="t" style="left:409.00px;top:317.46px;font-size:3.4px;color:#111111;transform:scaleX(0.795);">DESCRIZIONE SERVIZI PREVENTIVO</span><span class="t" style="left:409.00px;top:325.56px;font-size:3.4px;color:#111111;font-weight:bold;transform:scaleX(0.888);">Data Inizio</span><span class="t" style="left:480.40px;top:325.56px;font-size:3.4px;color:#111111;font-weight:bold;transform:scaleX(1.393);">Data</span><span class="t" style="left:409.00px;top:331.46px;font-size:3.4px;color:#111111;transform:scaleX(0.871);">NOME Cognome ab</span><span class="t" style="left:480.40px;top:331.46px;font-size:3.4px;color:#111111;transform:scaleX(0.902);">NOME Cognome</span><span class="t" style="left:409.00px;top:336.96px;font-size:3.4px;color:#111111;transform:scaleX(0.896);">INDIRIZZO Via Nazionale 10 Roma</span><span class="t" style="left:480.40px;top:336.96px;font-size:3.4px;color:#111111;transform:scaleX(1.059);">INDIRIZZO Via 5</span><span class="t" style="left:409.00px;top:342.76px;font-size:3.4px;color:#707070;transform:scaleX(1.018);">Cod. Fisc.</span><span class="t" style="left:409.00px;top:348.26px;font-size:3.4px;color:#111111;transform:scaleX(0.990);">CITTA 00100 Roma Lazio Italia RM 000000</span><span class="t" style="left:480.40px;top:348.26px;font-size:3.4px;color:#111111;transform:scaleX(0.963);">CITTA 00100 Roma Lazio</span><span class="t" style="left:409.00px;top:353.86px;font-size:3.4px;color:#111111;transform:scaleX(0.874);">TELEFONO 333 0000000 ab</span><span class="t" style="left:480.40px;top:353.86px;font-size:3.4px;color:#111111;transform:scaleX(0.927);">TELEFONO 333 000000 00</span><div class="a" style="left:409px;top:369px;width:112.3px;height:9.3px;background:#1fe6f2;"></div><span class="t" style="left:424.00px;top:373.16px;font-size:3.2px;color:#2a4a50;transform:scaleX(0.631);">DESCRIZIONE SERVIZIO</span><span class="t" style="left:464.00px;top:371.15px;font-size:3.0px;color:#2a4a50;transform:scaleX(0.870);">QUANTITA</span><span class="t" style="left:466.00px;top:375.65px;font-size:3.0px;color:#2a4a50;transform:scaleX(1.059);">(ORE)</span><span class="t" style="left:485.00px;top:373.25px;font-size:3.0px;color:#2a4a50;transform:scaleX(0.643);">EURO</span><span class="t" style="left:504.00px;top:373.25px;font-size:3.0px;color:#2a4a50;transform:scaleX(0.878);">TOTALE</span><div class="a" style="left:409px;top:378.2px;width:112.3px;height:1px;background:#111;"></div><div class="a" style="left:496.2px;top:369px;width:1px;height:66px;background:#111;"></div><div class="a" style="left:409px;top:385px;width:112.3px;height:0.9px;background:#222;"></div><div class="a" style="left:409px;top:405.6px;width:112.3px;height:0.7px;background:#bbb;"></div><span class="t" style="left:413.00px;top:380.86px;font-size:3.6px;color:#222;transform:scaleX(0.648);">Prestazione Professionale consulenza</span><span class="t" style="left:470.00px;top:380.96px;font-size:3.4px;color:#555;">1</span><span class="t" style="left:486.00px;top:380.96px;font-size:3.4px;color:#777;transform:scaleX(1.158);">00</span><span class="t" style="left:505.00px;top:380.96px;font-size:3.4px;color:#555;transform:scaleX(0.894);">0,00</span><span class="t" style="left:409.00px;top:388.36px;font-size:3.6px;color:#222;transform:scaleX(0.798);">2. Progetto Sviluppo Software web</span><span class="t" style="left:470.00px;top:388.46px;font-size:3.4px;color:#555;">1</span><span class="t" style="left:486.00px;top:388.46px;font-size:3.4px;color:#777;transform:scaleX(1.158);">00</span><span class="t" style="left:505.00px;top:388.46px;font-size:3.4px;color:#555;transform:scaleX(0.894);">0,00</span><span class="t" style="left:409.00px;top:395.16px;font-size:3.6px;color:#222;transform:scaleX(0.788);">3. Consulenza Informatica Analisi Dati</span><span class="t" style="left:470.00px;top:395.26px;font-size:3.4px;color:#555;">1</span><span class="t" style="left:486.00px;top:395.26px;font-size:3.4px;color:#777;transform:scaleX(1.158);">00</span><span class="t" style="left:505.00px;top:395.26px;font-size:3.4px;color:#555;transform:scaleX(0.894);">0,00</span><span class="t" style="left:409.00px;top:401.56px;font-size:3.6px;color:#222;transform:scaleX(1.016);">4. Report Analisi</span><span class="t" style="left:470.00px;top:401.66px;font-size:3.4px;color:#555;">1</span><span class="t" style="left:486.00px;top:401.66px;font-size:3.4px;color:#777;transform:scaleX(1.158);">00</span><span class="t" style="left:505.00px;top:401.66px;font-size:3.4px;color:#555;transform:scaleX(0.894);">0,00</span><span class="t" style="left:409.00px;top:409.16px;font-size:3.6px;color:#222;transform:scaleX(0.819);">5. Manutenzione annuale sistema</span><span class="t" style="left:470.00px;top:409.26px;font-size:3.4px;color:#555;">1</span><span class="t" style="left:486.00px;top:409.26px;font-size:3.4px;color:#777;transform:scaleX(1.158);">00</span><span class="t" style="left:505.00px;top:409.26px;font-size:3.4px;color:#555;transform:scaleX(0.894);">0,00</span><span class="t" style="left:483.00px;top:415.66px;font-size:3.4px;color:#222;font-weight:bold;transform:scaleX(0.774);">IMPONIB.</span><span class="t" style="left:505.00px;top:415.66px;font-size:3.4px;color:#555;transform:scaleX(1.043);">0,00</span><div class="a" style="left:461px;top:418px;width:60.3px;height:0.9px;background:#222;"></div><span class="t" style="left:488.00px;top:420.25px;font-size:3.0px;color:#777;transform:scaleX(1.518);">IVA</span><span class="t" style="left:481.00px;top:425.06px;font-size:3.4px;color:#333;transform:scaleX(0.925);">RIT. ACC.</span><span class="t" style="left:507.00px;top:425.06px;font-size:3.4px;color:#555;transform:scaleX(0.829);">0,0</span><div class="a" style="left:461px;top:427.9px;width:60.3px;height:0.7px;background:#bbb;"></div><span class="t" style="left:489.00px;top:431.26px;font-size:3.4px;color:#222;font-weight:bold;transform:scaleX(0.785);">TOT.</span><span class="t" style="left:506.00px;top:431.26px;font-size:3.4px;color:#555;transform:scaleX(0.894);">0,00</span><div class="a" style="left:461px;top:434.3px;width:60.3px;height:0.9px;background:#222;"></div><div class="a" style="left:493px;top:442px;width:32px;height:9px;background:#7ff3f7;"></div><div class="a" style="left:409px;top:447.6px;width:101px;height:0.8px;background:#666;"></div><div class="a" style="left:559px;top:274px;width:0.8px;height:11px;background:#999;"></div><span class="t" style="left:560.60px;top:275.96px;font-size:3.6px;color:#111;font-weight:bold;transform:scaleX(0.841);">Nome</span><div class="a" style="left:571px;top:273.4px;width:103px;height:0.6px;background:#e6e6e6;"></div><div class="a" style="left:571px;top:278.8px;width:103px;height:0.9px;background:#a8a8a8;"></div><div class="a" style="left:643px;top:442px;width:31px;height:9px;background:#7ff3f7;"></div><div class="a" style="left:559px;top:447.6px;width:101px;height:0.8px;background:#666;"></div><div class="a" style="left:25px;top:711px;width:845px;height:9px;background:#474747;"></div><span class="t" style="left:30.40px;top:713.88px;font-size:7.5px;color:#d0d0d0;transform:scaleX(0.776);">20.66%</span><span class="t" style="left:71.00px;top:713.88px;font-size:7.5px;color:#d0d0d0;transform:scaleX(0.817);">2232 px x 2854 px (250 ppi)</span><span class="t" style="left:164.40px;top:713.64px;font-size:8px;color:#d0d0d0;transform:scaleX(0.867);">›</span><div class="a" style="left:858.5px;top:73px;width:11.5px;height:647px;background:#474747;"></div><div class="a" style="left:0px;top:40px;width:25px;height:680px;background:#4f4f4f;"></div><div class="a" style="left:0px;top:40px;width:25px;height:9px;background:#3f3f3f;"></div><span class="t" style="left:4.00px;top:41.14px;font-size:8px;color:#bdbdbd;">»</span><div class="a" style="left:3px;top:50px;width:19px;height:10px;background:#4a4a4a;"></div><div class="a" style="left:5px;top:52px;width:15px;height:0.6px;background:#5e5e5e;"></div><div class="a" style="left:5px;top:54px;width:15px;height:0.6px;background:#5e5e5e;"></div><div class="a" style="left:5px;top:56px;width:15px;height:0.6px;background:#5e5e5e;"></div><div class="a" style="left:23.5px;top:40px;width:1.5px;height:680px;background:#3a3a3a;"></div><div class="a" style="left:3px;top:62px;width:19px;height:15.5px;background:#353535;"></div><svg style="left:7px;top:63.3px" width="12" height="12" viewBox="0 0 12 12"><g fill="#dcdcdc"><rect x="5.5" y="1" width="1" height="10"/><rect x="1" y="5.5" width="10" height="1"/><circle cx="6" cy="1.5" r="1.3"/><circle cx="6" cy="10.5" r="1.3"/><circle cx="1.5" cy="6" r="1.3"/><circle cx="10.5" cy="6" r="1.3"/></g></svg><div class="a" style="left:19px;top:74.3px;width:1.4px;height:1.4px;background:#7e7e7e"></div><svg style="left:7px;top:81.3px" width="12" height="12" viewBox="0 0 12 12"><rect x="1.5" y="1.5" width="9" height="9" stroke="#dcdcdc" fill="none" stroke-width="0.95" stroke-dasharray="1.6 1.1"/></svg><div class="a" style="left:19px;top:92.3px;width:1.4px;height:1.4px;background:#7e7e7e"></div><svg style="left:7px;top:99.3px" width="12" height="12" viewBox="0 0 12 12"><path d="M1.5 2.5 L5.5 4.5 L10.5 1.5 L9.5 7.5 L5 8.5 M5.5 4.5 L3 8 L5 8.5 C3.5 9 2.5 10 3.5 11.2" stroke="#dcdcdc" fill="none" stroke-width="0.95" stroke-width="1.1"/></svg><div class="a" style="left:19px;top:110.3px;width:1.4px;height:1.4px;background:#7e7e7e"></div><svg style="left:7px;top:117.3px" width="12" height="12" viewBox="0 0 12 12"><rect x="1.5" y="1.5" width="7" height="7" stroke="#8a8a8a" stroke-width="0.8" fill="none"/><rect x="2.5" y="2.5" width="4.5" height="4.5" fill="#dcdcdc"/><path d="M6.5 6 L11.5 9 L9 9.5 L10.3 11.7 L9.4 12 L8.2 10 L6.5 11.5 Z" fill="#dcdcdc"/></svg><div class="a" style="left:19px;top:128.3px;width:1.4px;height:1.4px;background:#7e7e7e"></div><svg style="left:7px;top:135.3px" width="12" height="12" viewBox="0 0 12 12"><path d="M3 0.5 L3 9 L11.5 9 M0.5 3 L9 3 L9 11.5" stroke="#dcdcdc" fill="none" stroke-width="0.95" stroke-width="1.4"/></svg><div class="a" style="left:19px;top:146.3px;width:1.4px;height:1.4px;background:#7e7e7e"></div><svg style="left:7px;top:153.3px" width="12" height="12" viewBox="0 0 12 12"><rect x="1" y="1.5" width="10" height="9" stroke="#dcdcdc" fill="none" stroke-width="0.95"/><path d="M1 1.5 L11 10.5 M11 1.5 L1 10.5" stroke="#dcdcdc" fill="none" stroke-width="0.95"/></svg><div class="a" style="left:19px;top:164.3px;width:1.4px;height:1.4px;background:#7e7e7e"></div><svg style="left:7px;top:171.3px" width="12" height="12" viewBox="0 0 12 12"><g transform="rotate(45 6 6)"><rect x="4.3" y="3.5" width="3.4" height="8" rx="1.2" stroke="#dcdcdc" stroke-width="1" fill="none"/><rect x="3.2" y="2.6" width="5.6" height="1.6" fill="#dcdcdc"/><rect x="4.6" y="-0.2" width="2.8" height="3" rx="1" fill="#dcdcdc"/></g></svg><div class="a" style="left:19px;top:182.3px;width:1.4px;height:1.4px;background:#7e7e7e"></div><svg style="left:7px;top:189.3px" width="12" height="12" viewBox="0 0 12 12"><g transform="rotate(-40 6 6)"><rect x="0" y="3.3" width="12" height="5.4" rx="1.2" fill="#dcdcdc"/><rect x="2.3" y="3.3" width="1" height="5.4" fill="#4f4f4f"/><rect x="8.7" y="3.3" width="1" height="5.4" fill="#4f4f4f"/><rect x="4.6" y="4.6" width="2.8" height="2.8" fill="#4f4f4f"/></g></svg><div class="a" style="left:19px;top:200.3px;width:1.4px;height:1.4px;background:#7e7e7e"></div><svg style="left:7px;top:207.3px" width="12" height="12" viewBox="0 0 12 12"><path d="M11 1 L5 7" stroke="#dcdcdc" fill="none" stroke-width="0.95" stroke-width="1.3"/><path d="M5.2 6 L6 6.8 C6 9 4 11 1 11 C1.5 9 2.5 6.5 5.2 6 Z" fill="#dcdcdc"/></svg><div class="a" style="left:19px;top:218.3px;width:1.4px;height:1.4px;background:#7e7e7e"></div><svg style="left:7px;top:225.3px" width="12" height="12" viewBox="0 0 12 12"><circle cx="6" cy="3" r="2.2" fill="#dcdcdc"/><rect x="5" y="4" width="2" height="3" fill="#dcdcdc"/><path d="M1.5 8 L10.5 8 L10.5 10 L1.5 10 Z" fill="#dcdcdc"/><rect x="2" y="10.5" width="8" height="1" fill="#dcdcdc"/></svg><div class="a" style="left:19px;top:236.3px;width:1.4px;height:1.4px;background:#7e7e7e"></div><svg style="left:7px;top:243.3px" width="12" height="12" viewBox="0 0 12 12"><path d="M11 1 L5.5 6.5" stroke="#dcdcdc" fill="none" stroke-width="0.95" stroke-width="1.3"/><path d="M5.5 5.8 L6.3 6.6 C6 9 4 11 1.5 11 C2 9 3 6.5 5.5 5.8 Z" fill="#dcdcdc"/><path d="M1 3.5 A3 3 0 0 1 5 1" stroke="#dcdcdc" fill="none" stroke-width="0.95"/><path d="M1 1.5 L1 4 L3.5 4" stroke="#dcdcdc" fill="none" stroke-width="0.95" stroke-width="0.9"/></svg><div class="a" style="left:19px;top:254.3px;width:1.4px;height:1.4px;background:#7e7e7e"></div><svg style="left:7px;top:261.3px" width="12" height="12" viewBox="0 0 12 12"><g transform="rotate(-45 6 6)"><rect x="1" y="3.5" width="10" height="5" fill="none" stroke="#dcdcdc" stroke-width="1.1"/><rect x="6" y="3.5" width="5" height="5" fill="#dcdcdc"/></g><rect x="3" y="10.8" width="8" height="0.8" fill="#dcdcdc"/></svg><div class="a" style="left:19px;top:272.3px;width:1.4px;height:1.4px;background:#7e7e7e"></div><svg style="left:7px;top:279.3px" width="12" height="12" viewBox="0 0 12 12"><defs><linearGradient id="gg" x1="0" y1="0" x2="1" y2="1"><stop offset="0" stop-color="#222"/><stop offset="1" stop-color="#eee"/></linearGradient></defs><rect x="1" y="1.5" width="10" height="9" fill="url(#gg)" stroke="#dcdcdc" stroke-width="1"/></svg><div class="a" style="left:19px;top:290.3px;width:1.4px;height:1.4px;background:#7e7e7e"></div><svg style="left:7px;top:297.3px" width="12" height="12" viewBox="0 0 12 12"><path d="M6 1 C7.5 3.5 9.5 6 9.5 8 A3.5 3.5 0 0 1 2.5 8 C2.5 6 4.5 3.5 6 1 Z" fill="#dcdcdc"/></svg><svg style="left:7px;top:315.3px" width="12" height="12" viewBox="0 0 12 12"><circle cx="7" cy="5" r="3.8" fill="#dcdcdc"/><path d="M4.5 7.5 L1 11" stroke="#dcdcdc" fill="none" stroke-width="0.95" stroke-width="1.6"/></svg><div class="a" style="left:19px;top:326.3px;width:1.4px;height:1.4px;background:#7e7e7e"></div><svg style="left:7px;top:333.3px" width="12" height="12" viewBox="0 0 12 12"><path d="M1.5 10.5 L3 5 L7.5 1.5 L10.5 4.5 L7 9 Z" stroke="#dcdcdc" fill="none" stroke-width="0.95"/><circle cx="5.5" cy="6.5" r="1" fill="#dcdcdc"/><path d="M1.5 10.5 L4.8 7.2" stroke="#dcdcdc" fill="none" stroke-width="0.95" stroke-width="0.8"/></svg><div class="a" style="left:19px;top:344.3px;width:1.4px;height:1.4px;background:#7e7e7e"></div><svg style="left:7px;top:351.3px" width="12" height="12" viewBox="0 0 12 12"><path d="M1.5 1.5 L10.5 1.5 L10.5 3.5 M1.5 1.5 L1.5 3.5 M6 1.5 L6 10.5 M4 10.5 L8 10.5" stroke="#dcdcdc" fill="none" stroke-width="0.95" stroke-width="1.4"/></svg><div class="a" style="left:19px;top:362.3px;width:1.4px;height:1.4px;background:#7e7e7e"></div><svg style="left:7px;top:369.3px" width="12" height="12" viewBox="0 0 12 12"><path d="M3 1 L3 10.5 L5.5 8 L7.5 11.5 L9 10.8 L7.2 7.5 L10.5 7.3 Z" fill="#dcdcdc"/></svg><div class="a" style="left:19px;top:380.3px;width:1.4px;height:1.4px;background:#7e7e7e"></div><svg style="left:7px;top:387.3px" width="12" height="12" viewBox="0 0 12 12"><rect x="1" y="2" width="10" height="8" stroke="#dcdcdc" fill="none" stroke-width="0.95"/><rect x="2.2" y="3.2" width="7.6" height="5.6" fill="#6a6a6a"/></svg><div class="a" style="left:19px;top:398.3px;width:1.4px;height:1.4px;background:#7e7e7e"></div><svg style="left:7px;top:405.3px" width="12" height="12" viewBox="0 0 12 12"><path d="M3 11 C1.5 9 1 7 1.5 6 L3 6.5 L3 2.5 C3 1.5 4.3 1.5 4.3 2.5 L4.3 5 L4.6 1.5 C4.6 0.6 6 0.6 6 1.5 L6 5 L6.5 2 C6.5 1 7.8 1 7.8 2 L7.8 5.5 L8.3 3 C8.3 2.2 9.6 2.2 9.6 3 L9.6 7 C9.6 9 9 10 8.5 11 Z" fill="#dcdcdc"/></svg><div class="a" style="left:19px;top:416.3px;width:1.4px;height:1.4px;background:#7e7e7e"></div><svg style="left:7px;top:423.3px" width="12" height="12" viewBox="0 0 12 12"><circle cx="5" cy="5" r="3.7" stroke="#dcdcdc" fill="none" stroke-width="0.95" stroke-width="1.3"/><path d="M7.8 7.8 L11 11" stroke="#dcdcdc" fill="none" stroke-width="0.95" stroke-width="1.8"/></svg><div class="a" style="left:19px;top:434.3px;width:1.4px;height:1.4px;background:#7e7e7e"></div><svg style="left:7px;top:448px" width="12" height="3" viewBox="0 0 12 3"><g fill="#e0e0e0"><circle cx="1.7" cy="1.5" r="1.2"/><circle cx="6" cy="1.5" r="1.2"/><circle cx="10.3" cy="1.5" r="1.2"/></g></svg><svg style="left:3px;top:462.5px" width="20" height="10" viewBox="0 0 20 10"><rect x="0.5" y="0.5" width="4.5" height="4.5" fill="#111" stroke="#ddd" stroke-width="0.8"/><rect x="3" y="3" width="4.5" height="4.5" fill="#eee" stroke="#333" stroke-width="0.5"/><path d="M13 2 L17 2 L17 6 M15.5 3.8 L17 2.2 M13 2 L14.5 0.8 M17 6 L15.6 4.6" stroke="#ccc" stroke-width="0.9" fill="none"/></svg><div class="a" style="left:9px;top:481px;width:11.8px;height:11.8px;background:#f2f2f2;border:1px solid #3a3a3a;"></div><div class="a" style="left:3px;top:474px;width:11.6px;height:11.8px;background:#fbfbfb;border:1px solid #3a3a3a;"></div><svg style="left:7px;top:499.5px" width="12" height="12" viewBox="0 0 12 12"><rect x="1" y="1.5" width="10" height="9" stroke="#ccc" fill="none" stroke-width="1"/><rect x="3" y="3.5" width="6" height="5" stroke="#999" fill="none" stroke-width="0.9"/></svg><svg style="left:7px;top:517px" width="12" height="12" viewBox="0 0 12 12"><rect x="3.5" y="1" width="8" height="7" stroke="#ccc" fill="none" stroke-width="1"/><rect x="1" y="3.5" width="8" height="7.5" stroke="#ccc" fill="#4f4f4f" stroke-width="1"/></svg><div class="a" style="left:864px;top:40px;width:216px;height:680px;background:#474747;"></div><div class="a" style="left:864px;top:40px;width:216px;height:9px;background:#3d3d3d;"></div><div class="a" style="left:858.5px;top:73px;width:11.5px;height:647px;background:#474747;"></div><span class="t" style="left:886.00px;top:40.94px;font-size:8px;color:#cfcfcf;">«</span><span class="t" style="left:1066.00px;top:40.94px;font-size:8px;color:#cfcfcf;">»</span><div class="a" style="left:870px;top:49px;width:26px;height:671px;background:#505050;"></div><div class="a" style="left:870px;top:49px;width:0.8px;height:671px;background:#3e3e3e;"></div><div class="a" style="left:895px;top:49px;width:1px;height:671px;background:#3e3e3e;"></div><div class="a" style="left:871px;top:96.5px;width:24px;height:1.2px;background:#3d3d3d;"></div><div class="a" style="left:871px;top:145.3px;width:24px;height:1.2px;background:#3d3d3d;"></div><div class="a" style="left:871px;top:173.3px;width:24px;height:1.2px;background:#3d3d3d;"></div><div class="a" style="left:871px;top:204.5px;width:24px;height:1.2px;background:#3d3d3d;"></div><svg style="left:876px;top:58px" width="14" height="13" viewBox="0 0 14 13"><path d="M0.5 1 L4 1 M0.5 3 L4 3 M0.5 5 L4 5 M0.5 1 L0.5 7 L4 7" stroke="#dcdcdc" stroke-width="0.9" fill="none"/><path d="M13 1 L7 7" stroke="#dcdcdc" stroke-width="1.6"/><path d="M6.8 6 L8 7.2 C7.8 10 6 12 2.5 12 C3 9.5 4.5 6.5 6.8 6 Z" fill="#dcdcdc"/></svg><svg style="left:876px;top:77px" width="14" height="13" viewBox="0 0 14 13"><ellipse cx="3.5" cy="3" rx="2.8" ry="2" fill="#dcdcdc"/><rect x="6" y="2.5" width="7" height="1.2" fill="#dcdcdc"/><rect x="1" y="8.5" width="6" height="1.2" fill="#dcdcdc"/><path d="M7 9 L12.5 6 L12.5 12 Z" fill="#dcdcdc"/></svg><svg style="left:876px;top:106.5px" width="14" height="12" viewBox="0 0 14 13"><path d="M1 12 L5 1 L9 12 M2.5 8 L7.5 8" stroke="#dcdcdc" stroke-width="1.2" fill="none"/><rect x="11" y="1" width="1" height="11" fill="#dcdcdc"/></svg><svg style="left:877px;top:127px" width="12" height="12" viewBox="0 0 12 13"><path d="M5 1 L11 1 M6.5 1 L6.5 12 M9 1 L9 12" stroke="#dcdcdc" stroke-width="1.1" fill="none"/><path d="M6.5 1 C2 1 2 7 6.5 7 Z" fill="#dcdcdc"/></svg><svg style="left:876px;top:154px" width="14" height="13" viewBox="0 0 14 14"><path d="M2 12 C4 12 5 10 6 7 C7 4 8 1.5 11 1.5 C9 3 9 6 10 12 M3.5 7 L10 7 M1 1.5 C3 0.5 5 2.5 3.5 4" stroke="#dcdcdc" stroke-width="1.1" fill="none"/></svg><svg style="left:877px;top:182px" width="13" height="14" viewBox="0 0 13 14"><path d="M6.5 1 L12 4 L12 10 L6.5 13 L1 10 L1 4 Z M1 4 L6.5 7 L12 4 M6.5 7 L6.5 13" stroke="#b8b8b8" stroke-width="1" fill="none"/></svg><div class="a" style="left:896px;top:49px;width:179px;height:336px;background:#535353;"></div><div class="a" style="left:896px;top:49px;width:179px;height:19px;background:#444444;"></div><span class="t" style="left:901.40px;top:54.88px;font-size:7.5px;color:#a3a3a3;transform:scaleX(0.803);">Swatc</span><span class="t" style="left:924.30px;top:54.88px;font-size:7.5px;color:#a3a3a3;transform:scaleX(0.841);">Gradi</span><span class="t" style="left:946.30px;top:54.88px;font-size:7.5px;color:#a3a3a3;transform:scaleX(0.863);">Patter</span><span class="t" style="left:969.00px;top:54.88px;font-size:7.5px;color:#a3a3a3;">Histo</span><span class="t" style="left:992.00px;top:54.88px;font-size:7.5px;color:#a3a3a3;transform:scaleX(0.854);">Actior</span><div class="a" style="left:920.5px;top:51px;width:0.8px;height:15px;background:#3a3a3a;"></div><div class="a" style="left:943px;top:51px;width:0.8px;height:15px;background:#3a3a3a;"></div><div class="a" style="left:966px;top:51px;width:0.8px;height:15px;background:#3a3a3a;"></div><div class="a" style="left:989px;top:51px;width:0.8px;height:15px;background:#3a3a3a;"></div><div class="a" style="left:1009.7px;top:49px;width:39.3px;height:19px;background:#535353;"></div><span class="t" style="left:1014.00px;top:54.74px;font-size:7.8px;color:#f0f0f0;font-weight:bold;transform:scaleX(0.790);">Properties</span><svg style="left:1065.5px;top:55.5px" width="7" height="6" viewBox="0 0 7 6"><g fill="#bcbcbc"><rect y="0" width="7" height="1"/><rect y="2.5" width="7" height="1"/><rect y="5" width="7" height="1"/></g></svg><div class="a" style="left:903px;top:73.4px;width:13px;height:14.1px;background:#2f2f2f;"></div><svg style="left:905.5px;top:75.5px" width="8" height="10" viewBox="0 0 8 10"><path d="M0.6 0.6 L5 0.6 L7.4 3 L7.4 9.4 L0.6 9.4 Z M5 0.6 L5 3 L7.4 3" stroke="#d8d8d8" stroke-width="0.9" fill="none"/></svg><span class="t" style="left:920.80px;top:78.54px;font-size:7.8px;color:#d6d6d6;transform:scaleX(0.775);">Document</span><div class="a" style="left:896px;top:92px;width:170px;height:1.2px;background:#444444;"></div><svg style="left:900px;top:101.0px" width="6" height="3" viewBox="0 0 5 3"><path d="M0.5 0.3 L2.5 2.5 L4.5 0.3" stroke="#8f8f8f" stroke-width="0.9" fill="none"/></svg><span class="t" style="left:909.40px;top:98.74px;font-size:7.8px;color:#ececec;font-weight:bold;transform:scaleX(0.806);">Canvas</span><span class="t" style="left:928.90px;top:116.39px;font-size:7.5px;color:#bdbdbd;transform:scaleX(0.612);">W</span><div class="a" style="left:938.6px;top:114.7px;width:31.2px;height:10px;background:#3e3e3e;"></div><span class="t" style="left:941.00px;top:116.39px;font-size:7.5px;color:#dcdcdc;transform:scaleX(0.817);">2232 px</span><span class="t" style="left:979.90px;top:116.39px;font-size:7.5px;color:#a8a8a8;transform:scaleX(0.900);">X</span><div class="a" style="left:989px;top:114.7px;width:31px;height:10px;background:#4d4d4d;"></div><span class="t" style="left:992.00px;top:116.63px;font-size:7px;color:#6a6a6a;transform:scaleX(0.583);">0 px</span><span class="t" style="left:928.90px;top:134.08px;font-size:7.5px;color:#bdbdbd;transform:scaleX(0.980);">H</span><div class="a" style="left:938.6px;top:132.5px;width:31.2px;height:10.5px;background:#3e3e3e;"></div><span class="t" style="left:941.00px;top:134.08px;font-size:7.5px;color:#dcdcdc;transform:scaleX(0.817);">2854 px</span><span class="t" style="left:979.90px;top:134.08px;font-size:7.5px;color:#a8a8a8;transform:scaleX(0.900);">Y</span><div class="a" style="left:989px;top:132.5px;width:31px;height:10.5px;background:#4d4d4d;"></div><span class="t" style="left:992.00px;top:134.33px;font-size:7px;color:#6a6a6a;transform:scaleX(0.583);">0 px</span><svg style="left:906px;top:123px" width="7" height="12" viewBox="0 0 7 12"><rect x="1" y="0.8" width="5" height="4.6" rx="2.3" stroke="#c8c8c8" stroke-width="1.1" fill="none"/><rect x="1" y="6.6" width="5" height="4.6" rx="2.3" stroke="#c8c8c8" stroke-width="1.1" fill="none"/></svg><div class="a" style="left:938.6px;top:151.7px;width:13.4px;height:15.3px;background:#2e2e2e;"></div><svg style="left:941px;top:153.5px" width="9" height="12" viewBox="0 0 9 12"><rect x="0.5" y="0.5" width="8" height="11" stroke="#cfcfcf" stroke-width="0.9" fill="none"/><circle cx="4.5" cy="4" r="1.4" fill="#cfcfcf"/><path d="M2 11.5 L2 7.5 C2 6 7 6 7 7.5 L7 11.5 Z" fill="#cfcfcf"/></svg><svg style="left:957px;top:155px" width="12" height="10" viewBox="0 0 12 10"><rect x="0.5" y="0.5" width="11" height="9" stroke="#cfcfcf" stroke-width="0.9" fill="none"/><circle cx="6" cy="3.6" r="1.4" fill="#cfcfcf"/><path d="M3 9.5 L3 7 C3 5.6 9 5.6 9 7 L9 9.5 Z" fill="#cfcfcf"/></svg><span class="t" style="left:938.60px;top:176.38px;font-size:7.5px;color:#c8c8c8;transform:scaleX(0.831);">Resolution: 250 pixels/inch</span><span class="t" style="left:918.80px;top:193.78px;font-size:7.5px;color:#c4c4c4;transform:scaleX(0.807);">Mode</span><div class="a" style="left:938.6px;top:192.5px;width:81.89999999999998px;height:12.5px;background:#434343;"></div><span class="t" style="left:943.10px;top:195.13px;font-size:7.5px;color:#d0d0d0;transform:scaleX(0.751);">RGB Color</span><svg style="left:1014.0px;top:197.25px" width="5" height="3" viewBox="0 0 5 3"><path d="M0.5 0.3 L2.5 2.5 L4.5 0.3" stroke="#a8a8a8" stroke-width="0.9" fill="none"/></svg><div class="a" style="left:938.6px;top:209.5px;width:81.89999999999998px;height:13.5px;background:#434343;"></div><span class="t" style="left:943.10px;top:212.63px;font-size:7.5px;color:#d0d0d0;transform:scaleX(0.830);">16 Bits/Channel</span><svg style="left:1014.0px;top:214.75px" width="5" height="3" viewBox="0 0 5 3"><path d="M0.5 0.3 L2.5 2.5 L4.5 0.3" stroke="#a8a8a8" stroke-width="0.9" fill="none"/></svg><span class="t" style="left:926.00px;top:230.98px;font-size:7.5px;color:#c4c4c4;transform:scaleX(0.686);">Fill</span><div class="a" style="left:938.6px;top:228.3px;width:12.4px;height:13px;background:#535353;border:1px solid #3c3c3c;"></div><div class="a" style="left:953.2px;top:228.3px;width:67.29999999999995px;height:13.0px;background:#434343;"></div><span class="t" style="left:957.70px;top:231.19px;font-size:7.5px;color:#d0d0d0;transform:scaleX(0.811);">Transparent</span><svg style="left:1014.0px;top:233.3px" width="5" height="3" viewBox="0 0 5 3"><path d="M0.5 0.3 L2.5 2.5 L4.5 0.3" stroke="#a8a8a8" stroke-width="0.9" fill="none"/></svg><div class="a" style="left:896px;top:246.5px;width:170px;height:1.2px;background:#444444;"></div><svg style="left:900px;top:256.4px" width="6" height="3" viewBox="0 0 5 3"><path d="M0.5 0.3 L2.5 2.5 L4.5 0.3" stroke="#8f8f8f" stroke-width="0.9" fill="none"/></svg><span class="t" style="left:911.00px;top:254.14px;font-size:7.8px;color:#ececec;font-weight:bold;transform:scaleX(0.800);">Rulers &amp; Grids</span><div class="a" style="left:903.6px;top:270px;width:14px;height:16.7px;background:#2e2e2e;"></div><svg style="left:906px;top:273px" width="10" height="11" viewBox="0 0 10 11"><path d="M1 1 L9 1 L9 3 L3 3 L3 10 L1 10 Z" fill="#e0e0e0"/></svg><svg style="left:925px;top:272px" width="12" height="13" viewBox="0 0 12 13"><path d="M0.5 0.5 H11.5 V12.5 H0.5 Z M4.2 0.5 V12.5 M7.8 0.5 V12.5 M0.5 4.5 H11.5 M0.5 8.5 H11.5" stroke="#cfcfcf" stroke-width="0.8" fill="none"/></svg><svg style="left:946px;top:272px" width="11" height="13" viewBox="0 0 11 13"><rect x="0.5" y="0.5" width="10" height="12" stroke="#bdbdbd" stroke-width="0.8" fill="none"/><path d="M3 3 L8 3 L8 10 L3 10 Z" stroke="#8a8a8a" stroke-width="0.8" fill="none" stroke-dasharray="1 1"/></svg><div class="a" style="left:975px;top:272px;width:45.700000000000045px;height:13px;background:#434343;"></div><span class="t" style="left:979.50px;top:274.88px;font-size:7.5px;color:#d0d0d0;transform:scaleX(0.765);">Pixels</span><svg style="left:1014.2px;top:277.0px" width="5" height="3" viewBox="0 0 5 3"><path d="M0.5 0.3 L2.5 2.5 L4.5 0.3" stroke="#a8a8a8" stroke-width="0.9" fill="none"/></svg><div class="a" style="left:896px;top:294.3px;width:170px;height:1.2px;background:#444444;"></div><svg style="left:900px;top:303.5px" width="6" height="3" viewBox="0 0 5 3"><path d="M0.5 0.3 L2.5 2.5 L4.5 0.3" stroke="#8f8f8f" stroke-width="0.9" fill="none"/></svg><span class="t" style="left:911.00px;top:301.24px;font-size:7.8px;color:#ececec;font-weight:bold;transform:scaleX(0.735);">Guides</span><div class="a" style="left:903px;top:316.8px;width:15px;height:16.6px;background:#2e2e2e;"></div><svg style="left:905px;top:318.5px" width="11" height="13" viewBox="0 0 11 13"><path d="M3 0.5 V12.5 M6 0.5 V12.5 M0.5 4 H10.5 M0.5 8.5 H10.5" stroke="#e0e0e0" stroke-width="0.9" fill="none"/></svg><svg style="left:926px;top:318.5px" width="11" height="13" viewBox="0 0 11 13"><path d="M2 0.5 V12.5 M4.5 0.5 V12.5 M0.5 4 H6 M0.5 8.5 H6" stroke="#cfcfcf" stroke-width="0.9" fill="none"/><rect x="6" y="8" width="5" height="4" fill="#cfcfcf"/></svg><div class="a" style="left:944.5px;top:316.8px;width:14.5px;height:16.6px;background:#2e2e2e;"></div><svg style="left:946.5px;top:318.5px" width="11" height="13" viewBox="0 0 11 13"><path d="M2.5 0.5 V12.5 M0.5 4 H9 M5 2 L8 4 L5 6" stroke="#e0e0e0" stroke-width="0.9" fill="none"/><rect x="6" y="7" width="4" height="5" fill="#cfcfcf"/></svg><div class="a" style="left:975px;top:320px;width:45.700000000000045px;height:13.300000000000011px;background:#434343;"></div><svg style="left:1014.2px;top:325.15px" width="5" height="3" viewBox="0 0 5 3"><path d="M0.5 0.3 L2.5 2.5 L4.5 0.3" stroke="#a8a8a8" stroke-width="0.9" fill="none"/></svg><div class="a" style="left:979px;top:326.2px;width:28px;height:1.4px;background:#d8d8d8;"></div><div class="a" style="left:896px;top:341.8px;width:170px;height:1.2px;background:#444444;"></div><svg style="left:900px;top:351.0px" width="6" height="3" viewBox="0 0 5 3"><path d="M0.5 0.3 L2.5 2.5 L4.5 0.3" stroke="#8f8f8f" stroke-width="0.9" fill="none"/></svg><span class="t" style="left:911.00px;top:348.74px;font-size:7.8px;color:#ececec;font-weight:bold;transform:scaleX(0.795);">Quick Actions</span><div class="a" style="left:1066px;top:93px;width:9px;height:274px;background:#444444;"></div><div class="a" style="left:1067px;top:100px;width:7px;height:227px;background:#5e5e5e;"></div><svg style="left:1067.5px;top:95.5px" width="6" height="3" viewBox="0 0 5 3"><path d="M0.5 2.5 L2.5 0.3 L4.5 2.5" stroke="#777" stroke-width="0.9" fill="none"/></svg><svg style="left:1067.5px;top:360.5px" width="6" height="3" viewBox="0 0 5 3"><path d="M0.5 0.3 L2.5 2.5 L4.5 0.3" stroke="#777" stroke-width="0.9" fill="none"/></svg><div class="a" style="left:1075px;top:49px;width:5px;height:671px;background:#474747;"></div><div class="a" style="left:896px;top:385px;width:179px;height:335px;background:#535353;"></div><div class="a" style="left:896px;top:385px;width:179px;height:22px;background:#444444;"></div><div class="a" style="left:896px;top:385px;width:30px;height:22px;background:#535353;"></div><span class="t" style="left:901.40px;top:392.64px;font-size:7.8px;color:#f0f0f0;font-weight:bold;transform:scaleX(0.752);">Layers</span><svg style="left:1065.5px;top:393.5px" width="7" height="6" viewBox="0 0 7 6"><g fill="#bcbcbc"><rect y="0" width="7" height="1"/><rect y="2.5" width="7" height="1"/><rect y="5" width="7" height="1"/></g></svg><div class="a" style="left:899.7px;top:413px;width:52px;height:12.5px;background:#3c3c3c;"></div><svg style="left:902.5px;top:415px" width="8" height="8" viewBox="0 0 8 8"><circle cx="3.2" cy="3.2" r="2.4" stroke="#e0e0e0" stroke-width="1.1" fill="none"/><path d="M5 5 L7.5 7.5" stroke="#e0e0e0" stroke-width="1.4"/></svg><span class="t" style="left:912.00px;top:415.58px;font-size:7.5px;color:#e0e0e0;transform:scaleX(0.889);">Kind</span><svg style="left:945.5px;top:418.0px" width="5" height="3" viewBox="0 0 5 3"><path d="M0.5 0.3 L2.5 2.5 L4.5 0.3" stroke="#bdbdbd" stroke-width="0.9" fill="none"/></svg><svg style="left:958px;top:415px" width="11" height="10" viewBox="0 0 11 10"><rect x="0.5" y="0.5" width="10" height="9" stroke="#dedede" stroke-width="0.9" fill="none"/><path d="M2 8 L4.5 4.5 L6.5 7 L8 5.5 L9.5 8 Z" fill="#dedede"/></svg><svg style="left:973.5px;top:414.5px" width="11" height="11" viewBox="0 0 11 11"><circle cx="5.5" cy="5.5" r="4.5" stroke="#dedede" stroke-width="1" fill="none"/><path d="M5.5 1 A4.5 4.5 0 0 1 5.5 10 Z" fill="#dedede" transform="rotate(45 5.5 5.5)"/></svg><svg style="left:989px;top:415px" width="10" height="10" viewBox="0 0 10 10"><path d="M0.8 2.5 V0.8 H9.2 V2.5 M5 0.8 V9.2 M3 9.2 H7" stroke="#dedede" stroke-width="1.2" fill="none"/></svg><svg style="left:1003.5px;top:414.5px" width="11" height="11" viewBox="0 0 11 11"><rect x="1.5" y="1.5" width="8" height="8" stroke="#dedede" stroke-width="0.9" fill="none"/><g fill="#dedede"><rect x="0" y="0" width="3" height="3"/><rect x="8" y="0" width="3" height="3"/><rect x="0" y="8" width="3" height="3"/><rect x="8" y="8" width="3" height="3"/></g></svg><svg style="left:1019px;top:414.5px" width="10" height="11" viewBox="0 0 10 11"><path d="M0.8 0.8 H6 L9 3.8 V10.2 H0.8 Z" stroke="#dedede" stroke-width="0.9" fill="none"/><rect x="1.5" y="5.5" width="6" height="4.5" fill="#dedede"/></svg><svg style="left:1033px;top:412px" width="10" height="12" viewBox="0 0 10 12"><circle cx="5" cy="4" r="3.5" fill="#f0f0f0"/><rect x="4.3" y="7" width="1.4" height="4" fill="#aaa"/></svg><div class="a" style="left:896px;top:428px;width:170px;height:1px;background:#4a4a4a;"></div><div class="a" style="left:901.4px;top:433.4px;width:76.6px;height:11.4px;background:#4c4c4c;"></div><span class="t" style="left:904.00px;top:435.38px;font-size:7.5px;color:#6e6e6e;transform:scaleX(0.694);">Normal</span><span class="t" style="left:982.40px;top:435.38px;font-size:7.5px;color:#6e6e6e;transform:scaleX(0.835);">Opacity:</span><div class="a" style="left:1009.7px;top:433.4px;width:20.3px;height:11.4px;background:#474747;"></div><span class="t" style="left:1012.00px;top:435.63px;font-size:7px;color:#5e5e5e;transform:scaleX(0.848);">100%</span><div class="a" style="left:1030.5px;top:433.4px;width:9px;height:11.4px;background:#4c4c4c;"></div><div class="a" style="left:896px;top:448px;width:170px;height:1px;background:#4a4a4a;"></div><span class="t" style="left:898.80px;top:455.78px;font-size:7.5px;color:#7a7a7a;transform:scaleX(0.886);">Lock:</span><svg style="left:919px;top:454.5px" width="9" height="9" viewBox="0 0 9 9"><g fill="#8c8c8c"><rect x="0" y="0" width="3" height="3"/><rect x="6" y="0" width="3" height="3"/><rect x="3" y="3" width="3" height="3"/><rect x="0" y="6" width="3" height="3"/><rect x="6" y="6" width="3" height="3"/></g><rect x="0.4" y="0.4" width="8.2" height="8.2" stroke="#8c8c8c" stroke-width="0.7" fill="none"/></svg><svg style="left:932.5px;top:453.5px" width="10" height="11" viewBox="0 0 10 11"><path d="M9.5 0.5 L4 6" stroke="#8c8c8c" stroke-width="1.3"/><path d="M3.8 5.2 L4.8 6.2 C4.5 9 3 10.5 0.5 10.5 C1 8 2 5.8 3.8 5.2Z" fill="#8c8c8c"/></svg><svg style="left:945.5px;top:453.5px" width="11" height="11" viewBox="0 0 11 11"><path d="M5.5 0.5 V10.5 M0.5 5.5 H10.5" stroke="#8c8c8c" stroke-width="0.9"/><g fill="#8c8c8c"><circle cx="5.5" cy="1.2" r="1"/><circle cx="5.5" cy="9.8" r="1"/><circle cx="1.2" cy="5.5" r="1"/><circle cx="9.8" cy="5.5" r="1"/></g></svg><svg style="left:960px;top:454px" width="10" height="10" viewBox="0 0 10 10"><path d="M2 0 V8 H10 M0 2 H8 V10" stroke="#8c8c8c" stroke-width="0.9" fill="none"/></svg><svg style="left:974.5px;top:453px" width="9" height="11" viewBox="0 0 9 11"><path d="M2 5 V3.2 A2.5 2.5 0 0 1 7 3.2 V5" stroke="#8c8c8c" stroke-width="1" fill="none"/><rect x="0.5" y="5" width="8" height="5.5" fill="#8c8c8c"/></svg><span class="t" style="left:996.50px;top:455.78px;font-size:7.5px;color:#7a7a7a;transform:scaleX(0.907);">Fill:</span><div class="a" style="left:1009.7px;top:453.5px;width:20.3px;height:11.4px;background:#474747;"></div><span class="t" style="left:1012.00px;top:456.03px;font-size:7px;color:#5e5e5e;transform:scaleX(0.848);">100%</span><div class="a" style="left:1030.5px;top:453.5px;width:9px;height:11.4px;background:#4c4c4c;"></div><div class="a" style="left:896px;top:466px;width:170px;height:1px;background:#4a4a4a;"></div><div class="a" style="left:915px;top:467px;width:0.8px;height:253px;background:#474747;"></div><svg style="left:901.1px;top:473.5px" width="9" height="6" viewBox="0 0 9 6"><path d="M0.5 3 C2 0.6 7 0.6 8.5 3 C7 5.4 2 5.4 0.5 3 Z" stroke="#a8a8a8" stroke-width="0.9" fill="none"/><circle cx="4.5" cy="3" r="1.3" fill="#a8a8a8"/></svg><div class="a" style="left:915px;top:485.4px;width:150px;height:1px;background:#474747;"></div><svg style="left:901.1px;top:497.7px" width="9" height="6" viewBox="0 0 9 6"><path d="M0.5 3 C2 0.6 7 0.6 8.5 3 C7 5.4 2 5.4 0.5 3 Z" stroke="#a8a8a8" stroke-width="0.9" fill="none"/><circle cx="4.5" cy="3" r="1.3" fill="#a8a8a8"/></svg><div class="a" style="left:915px;top:514.8px;width:150px;height:1px;background:#474747;"></div><svg style="left:901.1px;top:526.55px" width="9" height="6" viewBox="0 0 9 6"><path d="M0.5 3 C2 0.6 7 0.6 8.5 3 C7 5.4 2 5.4 0.5 3 Z" stroke="#a8a8a8" stroke-width="0.9" fill="none"/><circle cx="4.5" cy="3" r="1.3" fill="#a8a8a8"/></svg><div class="a" style="left:915px;top:543.1px;width:150px;height:1px;background:#474747;"></div><svg style="left:901.1px;top:554.8px" width="9" height="6" viewBox="0 0 9 6"><path d="M0.5 3 C2 0.6 7 0.6 8.5 3 C7 5.4 2 5.4 0.5 3 Z" stroke="#a8a8a8" stroke-width="0.9" fill="none"/><circle cx="4.5" cy="3" r="1.3" fill="#a8a8a8"/></svg><div class="a" style="left:915px;top:571.3px;width:150px;height:1px;background:#474747;"></div><svg style="left:901px;top:582.45px" width="9" height="8" viewBox="0 0 9 8"><rect x="1.5" y="1" width="6" height="6.5" stroke="#5e5e5e" stroke-width="0.8" fill="none"/></svg><div class="a" style="left:915px;top:600.4px;width:150px;height:1px;background:#474747;"></div><svg style="left:901.1px;top:611.75px" width="9" height="6" viewBox="0 0 9 6"><path d="M0.5 3 C2 0.6 7 0.6 8.5 3 C7 5.4 2 5.4 0.5 3 Z" stroke="#a8a8a8" stroke-width="0.9" fill="none"/><circle cx="4.5" cy="3" r="1.3" fill="#a8a8a8"/></svg><div class="a" style="left:915px;top:627.9px;width:150px;height:1px;background:#474747;"></div><svg style="left:901.1px;top:640.1px" width="9" height="6" viewBox="0 0 9 6"><path d="M0.5 3 C2 0.6 7 0.6 8.5 3 C7 5.4 2 5.4 0.5 3 Z" stroke="#a8a8a8" stroke-width="0.9" fill="none"/><circle cx="4.5" cy="3" r="1.3" fill="#a8a8a8"/></svg><div class="a" style="left:915px;top:657.1px;width:150px;height:1px;background:#474747;"></div><svg style="left:901.1px;top:668.85px" width="9" height="6" viewBox="0 0 9 6"><path d="M0.5 3 C2 0.6 7 0.6 8.5 3 C7 5.4 2 5.4 0.5 3 Z" stroke="#a8a8a8" stroke-width="0.9" fill="none"/><circle cx="4.5" cy="3" r="1.3" fill="#a8a8a8"/></svg><div class="a" style="left:915px;top:685.4px;width:150px;height:1px;background:#474747;"></div><svg style="left:901.1px;top:693.0px" width="9" height="6" viewBox="0 0 9 6"><path d="M0.5 3 C2 0.6 7 0.6 8.5 3 C7 5.4 2 5.4 0.5 3 Z" stroke="#a8a8a8" stroke-width="0.9" fill="none"/><circle cx="4.5" cy="3" r="1.3" fill="#a8a8a8"/></svg><svg style="left:926.5px;top:477.0px" width="6" height="3" viewBox="0 0 5 3"><path d="M0.5 0.3 L2.5 2.5 L4.5 0.3" stroke="#a8a8a8" stroke-width="0.9" fill="none"/></svg><svg style="left:934.5px;top:473.5px" width="10" height="9" viewBox="0 0 10 9"><path d="M0.5 1 H4 L5 2.2 H9.5 V8.5 H0.5 Z" fill="#ededed"/><rect x="0.5" y="3" width="9" height="0.6" fill="#535353"/></svg><span class="t" style="left:951.30px;top:474.88px;font-size:7.5px;color:#dedede;transform:scaleX(0.807);">edite text</span><svg style="left:942.4px;top:495.5px" width="10" height="11" viewBox="0 0 10 11"><path d="M0.8 3 L0.8 0.8 L9.2 0.8 L9.2 3 M5 0.8 L5 10.2 M3 10.2 L7 10.2 M0.8 0.8 L0.8 2.5" stroke="#e8e8e8" stroke-width="1.3" fill="none"/></svg><span class="t" style="left:963.00px;top:497.38px;font-size:7.5px;color:#dedede;transform:scaleX(0.821);">Layer 2</span><div class="a checker" style="left:937.7px;top:519px;width:15.3px;height:20.8px;background-size:4px 4px;background-position:0 0,2px 2px"></div><div class="a" style="left:939px;top:521px;width:2.5px;height:3.5px;background:#b04040;opacity:0.8;"></div><span class="t" style="left:959.00px;top:526.38px;font-size:7.5px;color:#dedede;transform:scaleX(0.825);">Layer 3</span><svg style="left:942.4px;top:552.5px" width="10" height="11" viewBox="0 0 10 11"><path d="M0.8 3 L0.8 0.8 L9.2 0.8 L9.2 3 M5 0.8 L5 10.2 M3 10.2 L7 10.2 M0.8 0.8 L0.8 2.5" stroke="#e8e8e8" stroke-width="1.3" fill="none"/></svg><span class="t" style="left:963.00px;top:554.38px;font-size:7.5px;color:#dedede;transform:scaleX(0.802);">citta00000000...&lt;&lt;&lt;&lt;&lt;&lt;&lt;&lt;&lt;0 d</span><svg style="left:942.4px;top:581.9px" width="10" height="11" viewBox="0 0 10 11"><path d="M0.8 3 L0.8 0.8 L9.2 0.8 L9.2 3 M5 0.8 L5 10.2 M3 10.2 L7 10.2 M0.8 0.8 L0.8 2.5" stroke="#e8e8e8" stroke-width="1.3" fill="none"/></svg><span class="t" style="left:963.00px;top:583.78px;font-size:7.5px;color:#dedede;transform:scaleX(0.727);">1aa</span><svg style="left:942.4px;top:609.8px" width="10" height="11" viewBox="0 0 10 11"><path d="M0.8 3 L0.8 0.8 L9.2 0.8 L9.2 3 M5 0.8 L5 10.2 M3 10.2 L7 10.2 M0.8 0.8 L0.8 2.5" stroke="#e8e8e8" stroke-width="1.3" fill="none"/></svg><span class="t" style="left:963.10px;top:611.68px;font-size:7.5px;color:#dedede;transform:scaleX(0.802);">169</span><svg style="left:942.4px;top:638.5px" width="10" height="11" viewBox="0 0 10 11"><path d="M0.8 3 L0.8 0.8 L9.2 0.8 L9.2 3 M5 0.8 L5 10.2 M3 10.2 L7 10.2 M0.8 0.8 L0.8 2.5" stroke="#e8e8e8" stroke-width="1.3" fill="none"/></svg><span class="t" style="left:962.20px;top:640.88px;font-size:7.5px;color:#dedede;transform:scaleX(1.050);">m</span><svg style="left:942.4px;top:666.5px" width="10" height="11" viewBox="0 0 10 11"><path d="M0.8 3 L0.8 0.8 L9.2 0.8 L9.2 3 M5 0.8 L5 10.2 M3 10.2 L7 10.2 M0.8 0.8 L0.8 2.5" stroke="#e8e8e8" stroke-width="1.3" fill="none"/></svg><span class="t" style="left:963.00px;top:668.38px;font-size:7.5px;color:#dedede;transform:scaleX(0.834);">1254 b</span><svg style="left:942.4px;top:694.5px" width="10" height="11" viewBox="0 0 10 11"><path d="M0.8 3 L0.8 0.8 L9.2 0.8 L9.2 3 M5 0.8 L5 10.2 M3 10.2 L7 10.2 M0.8 0.8 L0.8 2.5" stroke="#e8e8e8" stroke-width="1.3" fill="none"/></svg><span class="t" style="left:963.00px;top:696.38px;font-size:7.5px;color:#dedede;transform:scaleX(0.776);">01.01.1990</span><div class="a" style="left:1066px;top:467px;width:9px;height:239px;background:#444444;"></div><div class="a" style="left:1067px;top:487px;width:7px;height:68px;background:#5e5e5e;"></div><svg style="left:1067.5px;top:469.5px" width="6" height="3" viewBox="0 0 5 3"><path d="M0.5 2.5 L2.5 0.3 L4.5 2.5" stroke="#777" stroke-width="0.9" fill="none"/></svg><div class="a" style="left:896px;top:706px;width:179px;height:14px;background:#535353;"></div><svg style="left:947.5px;top:710px" width="11" height="7" viewBox="0 0 11 7"><rect x="0.6" y="1" width="5.5" height="5" rx="2.5" stroke="#b8b8b8" stroke-width="1" fill="none"/><rect x="4.9" y="1" width="5.5" height="5" rx="2.5" stroke="#b8b8b8" stroke-width="1" fill="none"/></svg><span class="t" style="left:965.50px;top:709.74px;font-size:8px;color:#b8b8b8;font-family:"Liberation Serif";transform:scaleX(1.200);font-style:italic;">fx</span><svg style="left:981px;top:708.5px" width="11" height="10" viewBox="0 0 11 10"><rect x="0.5" y="0.5" width="10" height="9" fill="#b8b8b8"/><circle cx="5.5" cy="5" r="2.8" fill="#535353"/></svg><svg style="left:998.5px;top:708px" width="11" height="12" viewBox="0 0 11 12"><circle cx="5" cy="5" r="4.3" stroke="#b8b8b8" stroke-width="1" fill="none"/><path d="M5 0.7 A4.3 4.3 0 0 1 5 9.3 Z" fill="#b8b8b8" transform="rotate(45 5 5)"/><path d="M9 10 L10.5 11.5" stroke="#b8b8b8"/></svg><svg style="left:1015px;top:709px" width="11" height="9" viewBox="0 0 11 9"><path d="M0.5 0.5 H4 L5 2 H10.5 V8.5 H0.5 Z" fill="#e6e6e6"/></svg><svg style="left:1032.5px;top:708px" width="9" height="11" viewBox="0 0 9 11"><rect x="0.5" y="0.5" width="8" height="10" stroke="#b8b8b8" stroke-width="1" fill="none"/><path d="M4.5 3 V8 M2 5.5 H7" stroke="#b8b8b8" stroke-width="1"/></svg><svg style="left:1049px;top:708px" width="9" height="11" viewBox="0 0 9 11"><path d="M0.5 2 H8.5 M3 2 V0.5 H6 V2 M1.5 2 L2 10.5 H7 L7.5 2 M3.5 4 V9 M5.5 4 V9" stroke="#8a8a8a" stroke-width="0.9" fill="none"/></svg><div class="a" style="left:996px;top:657px;width:79px;height:47px;background:rgba(90,90,200,0.045)"></div><svg style="left:0;top:0" width="1080" height="720" viewBox="0 0 1080 720">
<g stroke="#1c1c1c" stroke-width="2.1" fill="none" stroke-linecap="butt">
<path d="M871.7 667.5 H859 V696 H871.7 M859 681.5 H870.3"/>
<path d="M877.8 666.5 V697 M893 666.5 L878.3 684 M883.5 677.5 L894 697"/>
<ellipse cx="907.5" cy="681.5" rx="10.4" ry="15.2"/>
<path d="M942.5 670.5 C939.5 667.5 937 666.8 934 666.8 C927 666.8 924.3 674 924.3 681.8 C924.3 690 927.5 696.3 934.3 696.3 C938 696.3 941 695 942.8 693.5 V682.3 H935"/>
<path d="M961.7 667.5 H950 V696 H961.7 M950 681.5 H960.5"/>
<path d="M963 697.5 L974.4 666.5 L986 697.5 M967.3 686.5 H981.8"/>
</g>
<circle cx="993.7" cy="695" r="2.1" fill="#1c1c1c"/>
<g stroke="#7d9e24" stroke-width="2.9" fill="none">
<ellipse cx="1010.2" cy="681.6" rx="10" ry="14.6"/>
<path d="M1028.6 697.5 V667.8 H1034 C1039 667.8 1041.3 671 1041.3 675.3 C1041.3 680 1038.5 683 1034 683 H1028.6 M1035 683 L1042.5 697.5"/>
<path d="M1067 671 C1064.5 668.3 1062 667.3 1058.5 667.3 C1051.5 667.3 1048.4 674 1048.4 681.8 C1048.4 690 1051.8 696.2 1058.6 696.2 C1062.5 696.2 1065.5 695 1067.5 693.5 V682.5 H1059.5"/>
</g></svg></body></html>
